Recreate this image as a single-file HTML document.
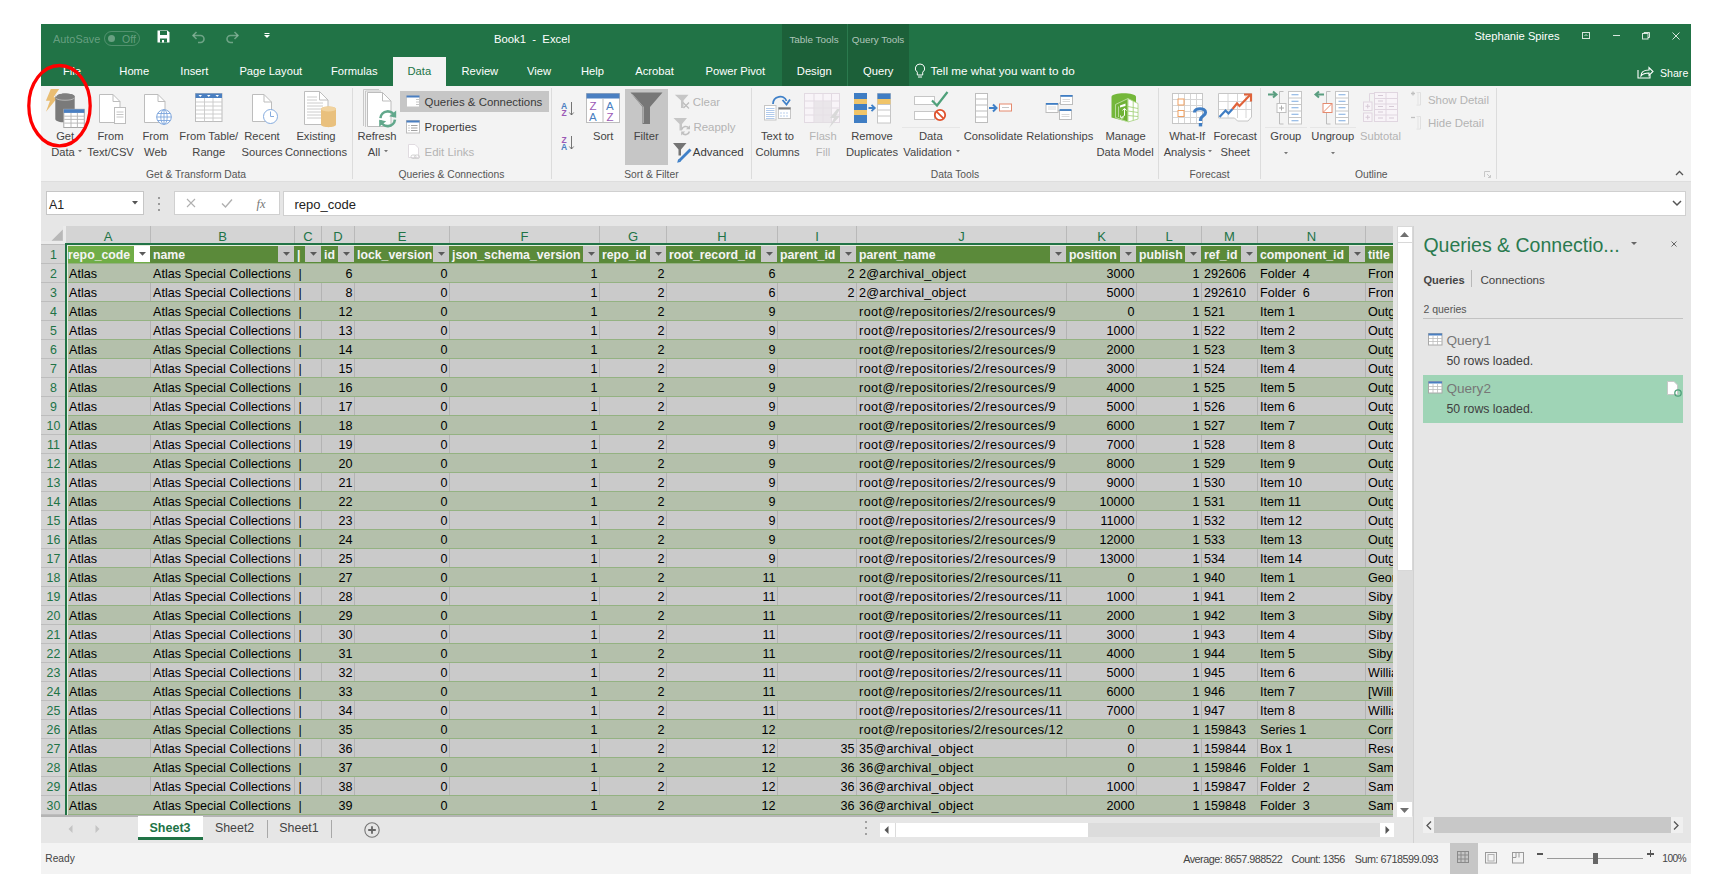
<!DOCTYPE html><html><head><meta charset="utf-8"><style>
html,body{margin:0;padding:0;background:#fff;width:1711px;height:896px;overflow:hidden;position:relative;font-family:"Liberation Sans", sans-serif;}
.a{position:absolute;}
.t{position:absolute;white-space:pre;font-family:"Liberation Sans", sans-serif;}
svg.a{overflow:visible;}
</style></head><body>
<div class="a" style="left:41px;top:24px;width:1650px;height:62px;background:#217346;"></div>
<div class="a" style="left:782px;top:24px;width:127px;height:62px;background:#1c6039;"></div>
<div class="a" style="left:847px;top:24px;width:1px;height:62px;background:#2b7a4e;"></div>
<div class="a" style="left:41px;top:86px;width:1650px;height:95px;background:#f3f3f3;"></div>
<div class="a" style="left:393px;top:57px;width:53px;height:29px;background:#f3f3f3;"></div>
<div class="a" style="left:41px;top:181px;width:1650px;height:45px;background:#e6e6e6;"></div>
<div class="a" style="left:41px;top:181px;width:1650px;height:1px;background:#dedede;"></div>
<div class="a" style="left:41px;top:816px;width:1372px;height:27px;background:#e6e6e6;"></div>
<div class="a" style="left:41px;top:843px;width:1650px;height:31px;background:#f3f3f3;"></div>
<div class="t" style="left:53px;top:33.77px;font-size:10.9px;line-height:10.9px;color:rgba(255,255,255,0.32);font-weight:400;">AutoSave</div>
<div class="a" style="left:103.5px;top:30.5px;width:36px;height:15px;border:1px solid rgba(255,255,255,0.22);border-radius:8px;box-sizing:border-box;"></div>
<div class="a" style="left:107.5px;top:35px;width:7px;height:7px;background:rgba(255,255,255,0.32);border-radius:50%;"></div>
<div class="t" style="left:122px;top:33.61px;font-size:10.5px;line-height:10.5px;color:rgba(255,255,255,0.32);font-weight:400;">Off</div>
<svg class="a" style="left:157px;top:30px;" width="13" height="13" viewBox="0 0 13 13"><path d="M0.5 0.5H10.5L12.5 2.5V12.5H0.5Z" fill="#fff"/><rect x="3" y="1" width="7" height="4" fill="#217346"/><rect x="3" y="8.5" width="7" height="4" fill="#217346"/><rect x="5" y="10" width="2" height="2.5" fill="#fff"/></svg>
<svg class="a" style="left:192px;top:30px;" width="13" height="13" viewBox="0 0 13 13"><path d="M1.5 5.5H8.5A3.5 3.5 0 0 1 8.5 12.5H6" stroke="rgba(255,255,255,0.35)" stroke-width="1.6" fill="none"/><path d="M4.5 2L1 5.5L4.5 9" stroke="rgba(255,255,255,0.35)" stroke-width="1.6" fill="none"/></svg>
<svg class="a" style="left:226px;top:30px;" width="13" height="13" viewBox="0 0 13 13"><path d="M11.5 5.5H4.5A3.5 3.5 0 0 0 4.5 12.5H7" stroke="rgba(255,255,255,0.35)" stroke-width="1.6" fill="none"/><path d="M8.5 2L12 5.5L8.5 9" stroke="rgba(255,255,255,0.35)" stroke-width="1.6" fill="none"/></svg>
<svg class="a" style="left:264px;top:33px;" width="6" height="6" viewBox="0 0 6 6"><rect x="0.5" y="0" width="5" height="1" fill="#fff"/><path d="M0 2H6L3 5Z" fill="#fff"/></svg>
<div class="t" style="left:332.00px;width:400px;text-align:center;top:33.93px;font-size:11.3px;line-height:11.3px;color:#fff;font-weight:400;">Book1  -  Excel</div>
<div class="t" style="left:1317.00px;width:400px;text-align:center;top:31.02px;font-size:11.2px;line-height:11.2px;color:#fff;font-weight:400;">Stephanie Spires</div>
<svg class="a" style="left:1582px;top:32px;" width="8" height="7" viewBox="0 0 8 7"><rect x="0.5" y="0.5" width="7" height="6" stroke="rgba(255,255,255,0.82)" fill="none" stroke-width="1"/><path d="M2.5 4L4 2.5L5.5 4" stroke="rgba(255,255,255,0.82)" fill="none" stroke-width="0.9"/></svg>
<div class="a" style="left:1612.5px;top:35px;width:7px;height:1px;background:rgba(255,255,255,0.82);"></div>
<svg class="a" style="left:1642px;top:32px;" width="8" height="8" viewBox="0 0 8 8"><rect x="0.5" y="1.5" width="5.5" height="5.5" stroke="rgba(255,255,255,0.82)" fill="none"/><path d="M2 1.5V0.5H7.5V5.5H6" stroke="rgba(255,255,255,0.82)" fill="none"/></svg>
<svg class="a" style="left:1672px;top:31.5px;" width="8" height="8" viewBox="0 0 8 8"><path d="M0.5 0.5L7.5 7.5M7.5 0.5L0.5 7.5" stroke="rgba(255,255,255,0.82)" stroke-width="1"/></svg>
<div class="t" style="left:63px;top:66.02px;font-size:11.2px;line-height:11.2px;color:#fff;font-weight:400;">File</div>
<div class="t" style="left:119.3px;top:66.02px;font-size:11.2px;line-height:11.2px;color:#fff;font-weight:400;">Home</div>
<div class="t" style="left:180.3px;top:66.02px;font-size:11.2px;line-height:11.2px;color:#fff;font-weight:400;">Insert</div>
<div class="t" style="left:239.4px;top:66.02px;font-size:11.2px;line-height:11.2px;color:#fff;font-weight:400;">Page Layout</div>
<div class="t" style="left:331px;top:66.02px;font-size:11.2px;line-height:11.2px;color:#fff;font-weight:400;">Formulas</div>
<div class="t" style="left:461.5px;top:66.02px;font-size:11.2px;line-height:11.2px;color:#fff;font-weight:400;">Review</div>
<div class="t" style="left:527px;top:66.02px;font-size:11.2px;line-height:11.2px;color:#fff;font-weight:400;">View</div>
<div class="t" style="left:581px;top:66.02px;font-size:11.2px;line-height:11.2px;color:#fff;font-weight:400;">Help</div>
<div class="t" style="left:635.3px;top:66.02px;font-size:11.2px;line-height:11.2px;color:#fff;font-weight:400;">Acrobat</div>
<div class="t" style="left:705.5px;top:66.02px;font-size:11.2px;line-height:11.2px;color:#fff;font-weight:400;">Power Pivot</div>
<div class="t" style="left:796.8px;top:66.02px;font-size:11.2px;line-height:11.2px;color:#fff;font-weight:400;">Design</div>
<div class="t" style="left:863px;top:66.02px;font-size:11.2px;line-height:11.2px;color:#fff;font-weight:400;">Query</div>
<div class="t" style="left:407.5px;top:66.02px;font-size:11.2px;line-height:11.2px;color:#217346;font-weight:400;">Data</div>
<div class="t" style="left:789.4px;top:34.92px;font-size:9.9px;line-height:9.9px;color:rgba(255,255,255,0.65);font-weight:400;">Table Tools</div>
<div class="t" style="left:851.8px;top:34.92px;font-size:9.9px;line-height:9.9px;color:rgba(255,255,255,0.65);font-weight:400;">Query Tools</div>
<svg class="a" style="left:914px;top:63px;" width="12" height="16" viewBox="0 0 12 16"><path d="M6 1A4.5 4.5 0 0 0 3.3 9.2V12H8.7V9.2A4.5 4.5 0 0 0 6 1Z" stroke="#fff" fill="none" stroke-width="1"/><path d="M4 14H8" stroke="#fff"/></svg>
<div class="t" style="left:930.5px;top:64.90px;font-size:11.7px;line-height:11.7px;color:#fff;font-weight:400;">Tell me what you want to do</div>
<svg class="a" style="left:1637px;top:65px;" width="17" height="14" viewBox="0 0 17 14"><path d="M1 5V13H13V10" stroke="#fff" fill="none" stroke-width="1.1"/><path d="M4 11C4 6 8 5 12 5V2.5L16 6.5L12 10.5V8C8.5 8 5.5 9 4 11Z" stroke="#fff" fill="none" stroke-width="1.1"/></svg>
<div class="t" style="left:1660px;top:67.53px;font-size:10.6px;line-height:10.6px;color:#fff;font-weight:400;">Share</div>
<div class="a" style="left:352px;top:88px;width:1px;height:91px;background:#dcdcdc;"></div>
<div class="a" style="left:551px;top:88px;width:1px;height:91px;background:#dcdcdc;"></div>
<div class="a" style="left:751px;top:88px;width:1px;height:91px;background:#dcdcdc;"></div>
<div class="a" style="left:1158px;top:88px;width:1px;height:91px;background:#dcdcdc;"></div>
<div class="a" style="left:1260px;top:88px;width:1px;height:91px;background:#dcdcdc;"></div>
<div class="a" style="left:1496px;top:88px;width:1px;height:91px;background:#dcdcdc;"></div>
<div class="t" style="left:-4.00px;width:400px;text-align:center;top:169.78px;font-size:10.3px;line-height:10.3px;color:#555555;font-weight:400;">Get &amp; Transform Data</div>
<div class="t" style="left:251.50px;width:400px;text-align:center;top:169.78px;font-size:10.3px;line-height:10.3px;color:#555555;font-weight:400;">Queries &amp; Connections</div>
<div class="t" style="left:451.40px;width:400px;text-align:center;top:169.78px;font-size:10.3px;line-height:10.3px;color:#555555;font-weight:400;">Sort &amp; Filter</div>
<div class="t" style="left:755.00px;width:400px;text-align:center;top:169.78px;font-size:10.3px;line-height:10.3px;color:#555555;font-weight:400;">Data Tools</div>
<div class="t" style="left:1009.60px;width:400px;text-align:center;top:169.78px;font-size:10.3px;line-height:10.3px;color:#555555;font-weight:400;">Forecast</div>
<div class="t" style="left:1171.30px;width:400px;text-align:center;top:169.78px;font-size:10.3px;line-height:10.3px;color:#555555;font-weight:400;">Outline</div>
<svg class="a" style="left:1484px;top:171px;" width="7" height="7" viewBox="0 0 7 7"><path d="M0.5 6V0.5H6" stroke="#c8c8c8" fill="none"/><path d="M3 3L6.5 6.5M6.5 4V6.5H4" stroke="#c8c8c8" fill="none"/></svg>
<svg class="a" style="left:1675px;top:170px;" width="9" height="6" viewBox="0 0 9 6"><path d="M1 5L4.5 1.5L8 5" stroke="#555" stroke-width="1.3" fill="none"/></svg>
<div class="t" style="left:-134.80px;width:400px;text-align:center;top:131.22px;font-size:11.2px;line-height:11.2px;color:#444444;font-weight:400;">Get</div>
<div class="t" style="left:-137.00px;width:400px;text-align:center;top:147.22px;font-size:11.2px;line-height:11.2px;color:#444444;font-weight:400;">Data</div>
<svg class="a" style="left:78.0px;top:150.0px;" width="4" height="2" viewBox="0 0 4 2"><path d="M0 0H4L2 2.2Z" fill="#777"/></svg>
<svg class="a" style="left:45px;top:88px;" width="42" height="42" viewBox="0 0 42 42">
<path d="M5.8 1H14.2L8.5 9.3H12.8L1 23.8L5 12.7H0.9Z" fill="#e9bd72"/>
<path d="M10.3 8.7C10.3 4.3 29.7 4.3 29.7 8.7V31C29.7 35.5 10.3 35.5 10.3 31Z" fill="#7a7a7a"/>
<ellipse cx="20" cy="8.7" rx="9.7" ry="3.3" fill="#808080"/>
<path d="M10.6 10C12.5 13 27.5 13 29.4 10" stroke="#bdbdbd" stroke-width="0.9" fill="none"/>
<path d="M10.5 8.5C12 5.5 17 5 17 5" stroke="#f3f3f3" stroke-width="1.2" fill="none"/>
<rect x="18.8" y="21.3" width="20.5" height="18.2" fill="#fff" stroke="#a8a8a8" stroke-width="1"/>
<rect x="18.8" y="21.3" width="20.5" height="3.6" fill="#4a7fc1"/>
<path d="M19.3 28.2H39M19.3 31.4H39M19.3 35.1H39M26 25V39.5M32.4 25V39.5" stroke="#b4b4b4" stroke-width="0.9"/>
</svg>
<div class="t" style="left:-89.50px;width:400px;text-align:center;top:131.22px;font-size:11.2px;line-height:11.2px;color:#444444;font-weight:400;">From</div>
<div class="t" style="left:-89.50px;width:400px;text-align:center;top:147.22px;font-size:11.2px;line-height:11.2px;color:#444444;font-weight:400;">Text/CSV</div>
<svg class="a" style="left:98px;top:93px;" width="30" height="32" viewBox="0 0 30 32">
<path d="M1.5 1.5H15L22 8.5V29.5H1.5Z" fill="#fff" stroke="#bdbdbd"/>
<path d="M15 1.5V8.5H22" fill="none" stroke="#bdbdbd"/>
<rect x="16.5" y="14.5" width="11" height="16" fill="#fff" stroke="#bdbdbd"/>
<path d="M18.5 19H25.5M18.5 21.5H25.5M18.5 24H25.5" stroke="#c6c6c6"/>
</svg>
<div class="t" style="left:-44.50px;width:400px;text-align:center;top:131.22px;font-size:11.2px;line-height:11.2px;color:#444444;font-weight:400;">From</div>
<div class="t" style="left:-44.50px;width:400px;text-align:center;top:147.22px;font-size:11.2px;line-height:11.2px;color:#444444;font-weight:400;">Web</div>
<svg class="a" style="left:143px;top:93px;" width="30" height="34" viewBox="0 0 30 34">
<path d="M1.5 1.5H15L22 8.5V29.5H1.5Z" fill="#fff" stroke="#bdbdbd"/>
<path d="M15 1.5V8.5H22" fill="none" stroke="#bdbdbd"/>
<circle cx="21" cy="24" r="7.3" fill="#fff" stroke="#7ea6dd" stroke-width="1"/>
<ellipse cx="21" cy="24" rx="3.2" ry="7.3" fill="none" stroke="#7ea6dd" stroke-width="0.9"/>
<path d="M13.7 24H28.3M14.7 20.5H27.3M14.7 27.5H27.3M21 16.7V31.3" stroke="#7ea6dd" stroke-width="0.9"/>
</svg>
<div class="t" style="left:8.80px;width:400px;text-align:center;top:131.22px;font-size:11.2px;line-height:11.2px;color:#444444;font-weight:400;">From Table/</div>
<div class="t" style="left:8.80px;width:400px;text-align:center;top:147.22px;font-size:11.2px;line-height:11.2px;color:#444444;font-weight:400;">Range</div>
<svg class="a" style="left:195px;top:93px;" width="28" height="30" viewBox="0 0 28 30">
<rect x="0.5" y="0.5" width="26.5" height="28" fill="#fff" stroke="#bdbdbd"/>
<rect x="0.5" y="0.5" width="26.5" height="4.5" fill="#4a7fc1"/>
<path d="M3.5 2H7L5.25 4Z M12 2H15.5L13.75 4Z M20.5 2H24L22.25 4Z" fill="#fff"/>
<path d="M1 9H27M1 13H27M1 17H27M1 21H27M1 25H27M9.5 5V28.5M18 5V28.5" stroke="#c8c8c8" stroke-width="0.9"/>
</svg>
<div class="t" style="left:62.00px;width:400px;text-align:center;top:131.22px;font-size:11.2px;line-height:11.2px;color:#444444;font-weight:400;">Recent</div>
<div class="t" style="left:62.00px;width:400px;text-align:center;top:147.22px;font-size:11.2px;line-height:11.2px;color:#444444;font-weight:400;">Sources</div>
<svg class="a" style="left:251px;top:93px;" width="28" height="32" viewBox="0 0 28 32">
<path d="M1.5 1.5H13L20.5 9V28.5H1.5Z" fill="#fff" stroke="#bdbdbd"/>
<path d="M13 1.5V9H20.5" fill="none" stroke="#bdbdbd"/>
<circle cx="19.5" cy="23.5" r="7" fill="#fff" stroke="#86acdf" stroke-width="1"/>
<path d="M19.5 18.5V23.5H23" stroke="#86acdf" fill="none"/>
</svg>
<div class="t" style="left:116.00px;width:400px;text-align:center;top:131.22px;font-size:11.2px;line-height:11.2px;color:#444444;font-weight:400;">Existing</div>
<div class="t" style="left:116.00px;width:400px;text-align:center;top:147.22px;font-size:11.2px;line-height:11.2px;color:#444444;font-weight:400;">Connections</div>
<svg class="a" style="left:303px;top:90px;" width="34" height="38" viewBox="0 0 34 38">
<path d="M1.5 1.5H16.5L25 10V34.5H1.5Z" fill="#fff" stroke="#bdbdbd"/>
<path d="M16.5 1.5V10H25" fill="none" stroke="#bdbdbd"/>
<path d="M4 7H14M4 10H14M4 13H20M4 16H20M4 19H20M4 22H20M4 25H20M4 28H20" stroke="#c6c6c6" stroke-width="0.9"/>
<path d="M18 19C18 15.5 33 15.5 33 19V34.5C33 38 18 38 18 34.5Z" fill="#e9c07d"/>
<ellipse cx="25.5" cy="19" rx="7.5" ry="2.5" fill="#f1d39f"/>
</svg>
<div class="t" style="left:177.00px;width:400px;text-align:center;top:131.22px;font-size:11.2px;line-height:11.2px;color:#444444;font-weight:400;">Refresh</div>
<div class="t" style="left:174.00px;width:400px;text-align:center;top:147.22px;font-size:11.2px;line-height:11.2px;color:#444444;font-weight:400;">All</div>
<svg class="a" style="left:384.0px;top:150.0px;" width="4" height="2" viewBox="0 0 4 2"><path d="M0 0H4L2 2.2Z" fill="#777"/></svg>
<svg class="a" style="left:355px;top:86px;" width="45" height="45" viewBox="0 0 45 45">
<path d="M8.5 40V3.5H24" stroke="#c8c8c8" fill="none"/>
<path d="M10.5 41V5H26" stroke="#c8c8c8" fill="none"/>
<path d="M12.5 40.5V6.5H27.5L36 15V40.5Z" fill="#fff" stroke="#bdbdbd"/>
<path d="M27.5 6.5V15H36" fill="none" stroke="#bdbdbd"/>
<path d="M25.45 32.2A7.25 7.25 0 0 1 39.7 30.8" stroke="#62a88c" stroke-width="2.6" fill="none"/>
<path d="M34.2 30.2L41.2 24.6V31.7Z" fill="#62a88c"/>
<path d="M39.95 33.7A7.25 7.25 0 0 1 25.7 34.6" stroke="#62a88c" stroke-width="2.6" fill="none"/>
<path d="M31.2 35.2L24.2 40.8V33.7Z" fill="#62a88c"/>
</svg>
<div class="a" style="left:399.5px;top:90.5px;width:149px;height:21.5px;background:#c6c6c6;"></div>
<svg class="a" style="left:406px;top:95px;" width="15" height="13" viewBox="0 0 15 13">
<rect x="0.5" y="0.5" width="13" height="11.5" fill="#fff" stroke="#c6c6c6"/>
<rect x="0.5" y="0.5" width="13" height="2" fill="#4a7fc1"/>
<path d="M10 4.5H13M10 7H13M10 9.5H13" stroke="#c6c6c6"/>
</svg>
<div class="t" style="left:424.6px;top:96.81px;font-size:11.45px;line-height:11.45px;color:#3a3a3a;font-weight:400;">Queries &amp; Connections</div>
<svg class="a" style="left:406px;top:120px;" width="15" height="14" viewBox="0 0 15 14">
<rect x="0.5" y="0.5" width="13" height="12.5" fill="#fff" stroke="#bdbdbd"/>
<rect x="0.5" y="0.5" width="13" height="2" fill="#4a7fc1"/>
<path d="M2.5 5.5H3.5M5 5.5H11.5M2.5 8H3.5M5 8H11.5M2.5 10.5H3.5M5 10.5H11.5" stroke="#8a8a8a" stroke-width="0.8"/>
</svg>
<div class="t" style="left:424.6px;top:121.61px;font-size:11.45px;line-height:11.45px;color:#3a3a3a;font-weight:400;">Properties</div>
<svg class="a" style="left:407px;top:144px;" width="15" height="16" viewBox="0 0 15 16">
<path d="M1.5 0.5H8L11.5 4V13.5H1.5Z" fill="#fff" stroke="#e0dbe0"/>
<rect x="4" y="11" width="5" height="3.5" rx="1.7" fill="none" stroke="#d0d0d0"/>
<rect x="7.5" y="11" width="5" height="3.5" rx="1.7" fill="none" stroke="#d0d0d0"/>
</svg>
<div class="t" style="left:424.6px;top:146.81px;font-size:11.45px;line-height:11.45px;color:#b4b4b4;font-weight:400;">Edit Links</div>
<svg class="a" style="left:561px;top:101px;" width="14" height="17" viewBox="0 0 14 17">
<text x="0" y="7.5" font-family="Liberation Sans" font-size="8.5" font-weight="700" fill="#4a7fc1">A</text>
<text x="0.5" y="15" font-family="Liberation Sans" font-size="8.5" font-weight="700" fill="#9b59b6">Z</text>
<path d="M10.5 1V14M8.3 11.5L10.5 14L12.7 11.5" stroke="#666" stroke-width="0.9" fill="none"/>
</svg>
<svg class="a" style="left:561px;top:135px;" width="14" height="17" viewBox="0 0 14 17">
<text x="0.5" y="7.5" font-family="Liberation Sans" font-size="8.5" font-weight="700" fill="#9b59b6">Z</text>
<text x="0" y="15" font-family="Liberation Sans" font-size="8.5" font-weight="700" fill="#4a7fc1">A</text>
<path d="M10.5 1V14M8.3 11.5L10.5 14L12.7 11.5" stroke="#666" stroke-width="0.9" fill="none"/>
</svg>
<svg class="a" style="left:586px;top:93px;" width="35" height="31" viewBox="0 0 35 31">
<rect x="0.5" y="0.5" width="33" height="29" fill="#fff" stroke="#bdbdbd"/>
<rect x="0.5" y="0.5" width="33" height="5" fill="#4a7fc1"/>
<path d="M17 5.5V29.5" stroke="#bdbdbd"/>
<text x="3.5" y="17" font-family="Liberation Sans" font-size="11.5" fill="#9b59b6">Z</text>
<text x="3" y="28" font-family="Liberation Sans" font-size="11.5" fill="#4a7fc1">A</text>
<text x="20" y="17" font-family="Liberation Sans" font-size="11.5" fill="#4a7fc1">A</text>
<text x="20.5" y="28" font-family="Liberation Sans" font-size="11.5" fill="#9b59b6">Z</text>
</svg>
<div class="t" style="left:403.20px;width:400px;text-align:center;top:131.22px;font-size:11.2px;line-height:11.2px;color:#444444;font-weight:400;">Sort</div>
<div class="a" style="left:625px;top:88.5px;width:43px;height:76px;background:#c6c6c6;"></div>
<svg class="a" style="left:629px;top:91px;" width="35" height="35" viewBox="0 0 35 35">
<path d="M1.5 1.5H33.5L21 16V33H13.5V16Z" fill="#777"/>
<path d="M3 2.8L14.5 16V32" stroke="#a8a8a8" stroke-width="1" fill="none"/>
</svg>
<div class="t" style="left:446.20px;width:400px;text-align:center;top:131.22px;font-size:11.2px;line-height:11.2px;color:#444444;font-weight:400;">Filter</div>
<svg class="a" style="left:674px;top:94px;" width="18" height="17" viewBox="0 0 18 17">
<path d="M0.8 0.8H14.5L9.5 6.5V14H7V6.5Z" fill="#c6c6c6"/>
<path d="M9 8.5L15 14.5M15 8.5L9.5 14" stroke="#bcbcbc" stroke-width="1.2"/>
</svg>
<div class="t" style="left:692.8px;top:96.81px;font-size:11.45px;line-height:11.45px;color:#b4b4b4;font-weight:400;">Clear</div>
<svg class="a" style="left:673px;top:117px;" width="20" height="20" viewBox="0 0 20 20">
<path d="M0.5 1H14L9 7V13.5H6.5V7Z" fill="#c6c6c6"/>
<path d="M8.8 12.5A4 4 0 0 1 15.8 11" stroke="#c0c0c0" stroke-width="1.6" fill="none"/>
<path d="M17 8.3V12.3H13Z" fill="#c0c0c0"/>
<path d="M16.4 14.5A4 4 0 0 1 9.3 16" stroke="#c0c0c0" stroke-width="1.6" fill="none"/>
<path d="M8.2 18.6V14.6H12.2Z" fill="#c0c0c0"/>
</svg>
<div class="t" style="left:693.5px;top:121.61px;font-size:11.45px;line-height:11.45px;color:#b4b4b4;font-weight:400;">Reapply</div>
<svg class="a" style="left:672px;top:142px;" width="22" height="22" viewBox="0 0 22 22">
<path d="M1 1H14.5L9 7.5V13.5H6.5V7.5Z" fill="#747474"/>
<path d="M18.5 7.5L7.5 18.5" stroke="#3f80c8" stroke-width="2.8"/>
<path d="M5.2 20.8L6.2 17L9 19.8Z" fill="#3f80c8"/>
</svg>
<div class="t" style="left:692.8px;top:146.81px;font-size:11.45px;line-height:11.45px;color:#3a3a3a;font-weight:400;">Advanced</div>
<div class="t" style="left:577.50px;width:400px;text-align:center;top:131.22px;font-size:11.2px;line-height:11.2px;color:#444444;font-weight:400;">Text to</div>
<div class="t" style="left:577.50px;width:400px;text-align:center;top:147.22px;font-size:11.2px;line-height:11.2px;color:#444444;font-weight:400;">Columns</div>
<svg class="a" style="left:763px;top:94px;" width="30" height="28" viewBox="0 0 30 28">
<path d="M10 10C10 2 21 0 23.5 7" stroke="#3f80c8" stroke-width="1.8" fill="none"/>
<path d="M19.5 6L23.5 10.5L27 5.5" stroke="#3f80c8" stroke-width="1.8" fill="none"/>
<rect x="1.5" y="11.5" width="11.5" height="14.5" fill="#fff" stroke="#c6c6c6"/>
<path d="M3 14.5H11.5M3 16.5H11.5M3 18.5H11.5M3 20.5H11.5M3 22.5H11.5M3 24.5H11.5" stroke="#9dbde6" stroke-width="0.8"/>
<rect x="15.5" y="13.5" width="12" height="11" fill="#fff" stroke="#c6c6c6"/>
<rect x="15.5" y="13.5" width="12" height="2" fill="#777"/>
<path d="M17 19H26M17 22H26" stroke="#a8c4e8" stroke-width="0.8" stroke-dasharray="2 1"/>
</svg>
<div class="t" style="left:623.00px;width:400px;text-align:center;top:131.22px;font-size:11.2px;line-height:11.2px;color:#b4b4b4;font-weight:400;">Flash</div>
<div class="t" style="left:623.00px;width:400px;text-align:center;top:147.22px;font-size:11.2px;line-height:11.2px;color:#b4b4b4;font-weight:400;">Fill</div>
<svg class="a" style="left:804px;top:93px;" width="38" height="36" viewBox="0 0 38 36">
<rect x="0.5" y="0.5" width="35" height="29" fill="#f8f4f8" stroke="#e2dae2"/>
<path d="M1 8H36M1 15H36M1 22H36M10 1V30M19 1V30M27.5 1V30" stroke="#e2dae2"/>
<rect x="10" y="8" width="17.5" height="21.5" fill="#e6e2e6" opacity="0.8"/>
<path d="M33 16L26 25H30L25 35L36 23H32L36 16Z" fill="#d9d9d9"/>
</svg>
<div class="t" style="left:672.00px;width:400px;text-align:center;top:131.22px;font-size:11.2px;line-height:11.2px;color:#444444;font-weight:400;">Remove</div>
<div class="t" style="left:672.00px;width:400px;text-align:center;top:147.22px;font-size:11.2px;line-height:11.2px;color:#444444;font-weight:400;">Duplicates</div>
<svg class="a" style="left:853px;top:92px;" width="39" height="32" viewBox="0 0 39 32">
<rect x="1" y="1" width="13" height="30" fill="#3f7dc3"/>
<rect x="1" y="7" width="13" height="5" fill="#f0c468"/>
<rect x="1" y="18" width="13" height="5" fill="#f0c468"/>
<rect x="24.5" y="1.5" width="13" height="29.5" fill="#fff" stroke="#c6c6c6"/>
<rect x="24.5" y="1.5" width="13" height="5.5" fill="#3f7dc3"/>
<rect x="24.5" y="7" width="13" height="5.5" fill="#f0c468"/>
<path d="M25 12.5H37.5M25 18H37.5M25 24H37.5" stroke="#c6c6c6"/>
<path d="M15.5 16H21.5M18.5 12.8L21.8 16L18.5 19.2" stroke="#3f80c8" stroke-width="1.8" fill="none"/>
</svg>
<div class="t" style="left:730.80px;width:400px;text-align:center;top:131.22px;font-size:11.2px;line-height:11.2px;color:#444444;font-weight:400;">Data</div>
<div class="t" style="left:727.50px;width:400px;text-align:center;top:147.22px;font-size:11.2px;line-height:11.2px;color:#444444;font-weight:400;">Validation</div>
<svg class="a" style="left:956.0px;top:150.0px;" width="4" height="2" viewBox="0 0 4 2"><path d="M0 0H4L2 2.2Z" fill="#777"/></svg>
<svg class="a" style="left:913px;top:90px;" width="37" height="32" viewBox="0 0 37 32">
<rect x="1.5" y="6.5" width="20" height="8" fill="#fff" stroke="#c6c6c6"/>
<rect x="1.5" y="21.5" width="20" height="8" fill="#fff" stroke="#c6c6c6"/>
<path d="M19 10.5L24 15.5L34.5 2" stroke="#4fa07a" stroke-width="2.2" fill="none"/>
<circle cx="27" cy="25" r="5.2" fill="#fff" stroke="#e0522d" stroke-width="1.8"/>
<path d="M23.6 21.6L30.4 28.4" stroke="#e0522d" stroke-width="1.8"/>
</svg>
<div class="a" style="left:902px;top:127px;width:58px;height:1px;background:#e6e6e6;"></div>
<div class="t" style="left:793.30px;width:400px;text-align:center;top:131.22px;font-size:11.2px;line-height:11.2px;color:#444444;font-weight:400;">Consolidate</div>
<svg class="a" style="left:974px;top:92px;" width="40" height="32" viewBox="0 0 40 32">
<rect x="1.5" y="1.5" width="12" height="29" fill="#fff" stroke="#bdbdbd"/>
<path d="M2 7H13M2 13H13M2 19H13M2 25H13" stroke="#bdbdbd"/>
<path d="M15 16H22M19 12.5L22.5 16L19 19.5" stroke="#3f80c8" stroke-width="2" fill="none"/>
<rect x="25.5" y="12" width="12" height="7" fill="#fff" stroke="#e58a6e"/>
<path d="M28 15.5H35" stroke="#c6c6c6"/>
</svg>
<div class="t" style="left:859.80px;width:400px;text-align:center;top:131.22px;font-size:11.2px;line-height:11.2px;color:#444444;font-weight:400;">Relationships</div>
<svg class="a" style="left:1045px;top:94px;" width="30" height="28" viewBox="0 0 30 28">
<rect x="15.5" y="1.5" width="12" height="9" fill="#fff" stroke="#bdbdbd"/>
<rect x="15.5" y="1" width="12" height="1.8" fill="#3f7dc3"/>
<rect x="1" y="9.5" width="12" height="9" fill="#fff" stroke="#bdbdbd"/>
<rect x="1" y="9" width="12" height="1.8" fill="#3f7dc3"/>
<rect x="14.5" y="16.5" width="12" height="9" fill="#fff" stroke="#bdbdbd"/>
<path d="M14.5 16H26.5" stroke="#3f7dc3" stroke-width="1.8"/>
<path d="M17.5 5.5H25M17.5 7.5H25M3 13H11M3 15H11M16.5 20.5H24.5M16.5 22.5H24.5" stroke="#d0d0d0" stroke-width="0.8"/>
<path d="M13 11L15.5 8M13 16L14.5 18" stroke="#bdbdbd"/>
</svg>
<div class="t" style="left:925.60px;width:400px;text-align:center;top:131.22px;font-size:11.2px;line-height:11.2px;color:#444444;font-weight:400;">Manage</div>
<div class="t" style="left:925.10px;width:400px;text-align:center;top:147.22px;font-size:11.2px;line-height:11.2px;color:#444444;font-weight:400;">Data Model</div>
<svg class="a" style="left:1105px;top:88px;" width="40" height="40" viewBox="0 0 40 40">
<path d="M6.5 9C6.5 4 31 4 31 9V15L23 34L6.5 29.5Z" fill="#74b73a"/>
<path d="M10.5 16.5L23 10.5V34L10.5 29.5Z" fill="#6fb236" stroke="#d8ecc8" stroke-width="0.7"/>
<path d="M23 10.5L33 15.5V31L23 34Z" fill="#fff" stroke="#a6d27e" stroke-width="0.8"/>
<path d="M28.2 13V32.5M23 18.5L33 20.5M23 23L33 24.5M23 27.5L33 28.5" stroke="#a6d27e" stroke-width="0.9"/>
<path d="M15 17.5L20.5 15.5V18L15 19.5Z" fill="#fff"/>
<path d="M13.5 18.5V29" stroke="#e6f2dc" stroke-width="0.6"/>
<path d="M19.5 21V27.5L16.5 29.5" stroke="#fff" stroke-width="1" fill="none"/>
<path d="M17.5 22.5L19.5 20.3L21.5 22.5" stroke="#fff" stroke-width="1" fill="none"/>
<path d="M15.5 27.5L16 30L18.5 29.8" stroke="#fff" stroke-width="1" fill="none"/>
</svg>
<div class="t" style="left:987.20px;width:400px;text-align:center;top:131.22px;font-size:11.2px;line-height:11.2px;color:#444444;font-weight:400;">What-If</div>
<div class="t" style="left:984.50px;width:400px;text-align:center;top:147.22px;font-size:11.2px;line-height:11.2px;color:#444444;font-weight:400;">Analysis</div>
<svg class="a" style="left:1207.5px;top:150.0px;" width="4" height="2" viewBox="0 0 4 2"><path d="M0 0H4L2 2.2Z" fill="#777"/></svg>
<svg class="a" style="left:1171px;top:92px;" width="38" height="36" viewBox="0 0 38 36">
<rect x="1.5" y="1.5" width="30" height="30" fill="#fff" stroke="#c6c6c6"/>
<path d="M2 7.5H31M2 13.5H31M2 19.5H31M2 25.5H31M7.5 2V31M13.5 2V31M19.5 2V31M25.5 2V31" stroke="#d6d6d6"/>
<rect x="7" y="7" width="6" height="6" fill="#fff" stroke="#f0a060"/>
<rect x="7" y="18.5" width="6" height="6" fill="#fff" stroke="#f0a060"/>
<path d="M23.5 20.5C23.5 15.5 34.5 15.5 34.5 20.5C34.5 24 29.5 24 29.5 27.5V29" stroke="#3f7dc3" stroke-width="3.2" fill="none"/>
<rect x="27.8" y="31" width="3.4" height="3.4" fill="#3f7dc3"/>
</svg>
<div class="t" style="left:1035.20px;width:400px;text-align:center;top:131.22px;font-size:11.2px;line-height:11.2px;color:#444444;font-weight:400;">Forecast</div>
<div class="t" style="left:1035.20px;width:400px;text-align:center;top:147.22px;font-size:11.2px;line-height:11.2px;color:#444444;font-weight:400;">Sheet</div>
<svg class="a" style="left:1217px;top:92px;" width="37" height="33" viewBox="0 0 37 33">
<path d="M1.5 1.5H34.5V25L31 29H20.5L17.5 26H1.5Z" fill="#fff" stroke="#c6c6c6"/>
<path d="M2 9.5H34M2 17.5H34M11 2V26M20.5 2V26M29 2V26" stroke="#d6d6d6"/>
<path d="M2.5 25L8.5 18.5L11.5 21.5L15.5 17" stroke="#3f7dc3" stroke-width="2.2" fill="none"/>
<path d="M15.5 17L20 11.5L22.5 14L33 3" stroke="#e0633a" stroke-width="2.2" fill="none"/>
<path d="M27 2.5H34V9.5" stroke="#e0633a" stroke-width="2.2" fill="none"/>
</svg>
<div class="t" style="left:1085.80px;width:400px;text-align:center;top:131.22px;font-size:11.2px;line-height:11.2px;color:#444444;font-weight:400;">Group</div>
<svg class="a" style="left:1284.0px;top:151.5px;" width="4" height="2" viewBox="0 0 4 2"><path d="M0 0H4L2 2.2Z" fill="#777"/></svg>
<svg class="a" style="left:1266px;top:90px;" width="38" height="37" viewBox="0 0 38 37">
<path d="M2 4.5H10M7 1.5L10.5 4.5L7 7.5" stroke="#5a9e80" stroke-width="2" fill="none"/>
<path d="M17.5 1.5H13.5V34H17.5" stroke="#bdbdbd" fill="none"/>
<rect x="11" y="13.5" width="9" height="9" fill="#fff" stroke="#c0c0c0"/>
<path d="M15.5 15.5V20.5M13 18H18" stroke="#aaa"/>
<rect x="22.5" y="1.5" width="13" height="32.5" fill="#fff" stroke="#c6c6c6"/>
<path d="M23 8H35.5M23 14.5H35.5M23 21H35.5M23 27.5H35.5" stroke="#c6c6c6"/>
<path d="M25.5 4.8H32.5M25.5 11.3H32.5M25.5 17.8H32.5M25.5 24.3H32.5M25.5 30.8H32.5" stroke="#7eaadf" stroke-width="1.1"/>
</svg>
<div class="a" style="left:1265px;top:127px;width:42px;height:1px;background:#e6e6e6;"></div>
<div class="t" style="left:1132.80px;width:400px;text-align:center;top:131.22px;font-size:11.2px;line-height:11.2px;color:#444444;font-weight:400;">Ungroup</div>
<svg class="a" style="left:1331.0px;top:151.5px;" width="4" height="2" viewBox="0 0 4 2"><path d="M0 0H4L2 2.2Z" fill="#777"/></svg>
<svg class="a" style="left:1313px;top:90px;" width="38" height="37" viewBox="0 0 38 37">
<path d="M11 4.5H3M6 1.5L2.5 4.5L6 7.5" stroke="#5a9e80" stroke-width="2" fill="none"/>
<path d="M17.5 1.5H13.5V34H17.5" stroke="#bdbdbd" fill="none"/>
<rect x="10" y="13.5" width="9" height="9" fill="#fff" stroke="#e58a6e"/>
<path d="M10.5 22L18.5 14" stroke="#e58a6e"/>
<rect x="22.5" y="1.5" width="13" height="32.5" fill="#fff" stroke="#c6c6c6"/>
<path d="M23 8H35.5M23 14.5H35.5M23 21H35.5M23 27.5H35.5" stroke="#c6c6c6"/>
<path d="M25.5 4.8H32.5M25.5 11.3H32.5M25.5 17.8H32.5M25.5 24.3H32.5M25.5 30.8H32.5" stroke="#7eaadf" stroke-width="1.1"/>
</svg>
<div class="a" style="left:1310px;top:127px;width:46px;height:1px;background:#e6e6e6;"></div>
<div class="t" style="left:1180.50px;width:400px;text-align:center;top:131.22px;font-size:11.2px;line-height:11.2px;color:#b4b4b4;font-weight:400;">Subtotal</div>
<svg class="a" style="left:1362px;top:92px;" width="37" height="32" viewBox="0 0 37 32">
<path d="M7.5 9.5V1.5H13" stroke="#e0d6e0" fill="none"/>
<rect x="12.5" y="0.5" width="23" height="29" fill="#f8f4f8" stroke="#e0d6e0"/>
<path d="M13 6.5H35M13 12H35M13 17.5H35M13 23H35M24 1V29.5" stroke="#e0d6e0"/>
<path d="M16 3.5H21M16 9H21M16 14.5H21M27 14.5H32M16 20H21M16 26H21M27 26H32" stroke="#d6cad6"/>
<rect x="1.5" y="10" width="8.5" height="8.5" fill="#f8f4f8" stroke="#e0d6e0"/>
<rect x="1.5" y="21" width="8.5" height="8.5" fill="#f8f4f8" stroke="#e0d6e0"/>
<path d="M5.75 12V16.5M3.5 14.25H8M5.75 23V27.5M3.5 25.25H8" stroke="#d6cad6"/>
</svg>
<svg class="a" style="left:1410px;top:91px;" width="16" height="16" viewBox="0 0 16 16">
<path d="M1 2.5H5M3 0.5V4.5" stroke="#c0c0c0" stroke-width="1.3"/>
<path d="M6.5 1.5H10.5V14H6.5" stroke="#e0e0e0" fill="none"/>
<path d="M8 1.5V14" stroke="#e8e8e8" stroke-width="1.5"/>
</svg>
<div class="t" style="left:1427.9px;top:94.81px;font-size:11.45px;line-height:11.45px;color:#b4b4b4;font-weight:400;">Show Detail</div>
<svg class="a" style="left:1410px;top:115px;" width="16" height="16" viewBox="0 0 16 16">
<path d="M1 2.5H5" stroke="#c0c0c0" stroke-width="1.3"/>
<path d="M6.5 1.5H10.5V14H6.5" stroke="#e0e0e0" fill="none"/>
<path d="M8 1.5V14" stroke="#e8e8e8" stroke-width="1.5"/>
</svg>
<div class="t" style="left:1428px;top:118.11px;font-size:11.45px;line-height:11.45px;color:#b4b4b4;font-weight:400;">Hide Detail</div>
<div class="a" style="left:46px;top:191px;width:98px;height:24px;background:#fff;border:1px solid #c6c6c6;box-sizing:border-box;"></div>
<div class="t" style="left:49px;top:199.00px;font-size:12.4px;line-height:12.4px;color:#222;font-weight:400;">A1</div>
<svg class="a" style="left:132px;top:201px;" width="6" height="4" viewBox="0 0 6 4"><path d="M0 0H6L3 3.5Z" fill="#555"/></svg>
<div class="a" style="left:158px;top:197px;width:1.5px;height:1.5px;background:#9a9a9a;"></div>
<div class="a" style="left:158px;top:203px;width:1.5px;height:1.5px;background:#9a9a9a;"></div>
<div class="a" style="left:158px;top:209px;width:1.5px;height:1.5px;background:#9a9a9a;"></div>
<div class="a" style="left:173.5px;top:191px;width:106px;height:24px;background:#fff;border:1px solid #d0d0d0;box-sizing:border-box;"></div>
<svg class="a" style="left:186px;top:198px;" width="10" height="10" viewBox="0 0 10 10"><path d="M1 1L9 9M9 1L1 9" stroke="#b0b0b0" stroke-width="1.1"/></svg>
<svg class="a" style="left:221px;top:198px;" width="12" height="10" viewBox="0 0 12 10"><path d="M1 5.5L4.5 9L11 1.5" stroke="#b0b0b0" stroke-width="1.4" fill="none"/></svg>
<div class="t" style="left:256.5px;top:197.92px;font-size:12.5px;line-height:12.5px;color:#777;font-weight:400;font-family:'Liberation Serif',serif;font-style:italic;">fx</div>
<div class="a" style="left:283px;top:191px;width:1403px;height:25px;background:#fff;border:1px solid #d0d0d0;box-sizing:border-box;"></div>
<div class="t" style="left:294.5px;top:198.30px;font-size:13px;line-height:13px;color:#222;font-weight:400;">repo_code</div>
<svg class="a" style="left:1672px;top:200px;" width="10" height="6" viewBox="0 0 10 6"><path d="M1 1L5 5L9 1" stroke="#555" stroke-width="1.5" fill="none"/></svg>
<div class="a" style="left:66px;top:226px;width:1327px;height:18px;background:#d4d4d4;"></div>
<div class="a" style="left:41px;top:226px;width:25px;height:18px;background:#e6e6e6;"></div>
<svg class="a" style="left:50px;top:228px;" width="14" height="14" viewBox="0 0 14 14"><path d="M12.8 1.5V12.8H1.5Z" fill="#b8b8b8"/></svg>
<div class="a" style="left:63px;top:226px;width:3px;height:17px;background:#ebebeb;"></div>
<div class="a" style="left:41px;top:240.5px;width:25px;height:3px;background:#ebebeb;"></div>
<div class="t" style="left:-92.00px;width:400px;text-align:center;top:229.50px;font-size:13px;line-height:13px;color:#217346;font-weight:400;">A</div>
<div class="a" style="left:150px;top:226px;width:1px;height:18px;background:#b9b9b9;"></div>
<div class="t" style="left:22.50px;width:400px;text-align:center;top:229.50px;font-size:13px;line-height:13px;color:#217346;font-weight:400;">B</div>
<div class="a" style="left:294px;top:226px;width:1px;height:18px;background:#b9b9b9;"></div>
<div class="t" style="left:108.00px;width:400px;text-align:center;top:229.50px;font-size:13px;line-height:13px;color:#217346;font-weight:400;">C</div>
<div class="a" style="left:321px;top:226px;width:1px;height:18px;background:#b9b9b9;"></div>
<div class="t" style="left:138.00px;width:400px;text-align:center;top:229.50px;font-size:13px;line-height:13px;color:#217346;font-weight:400;">D</div>
<div class="a" style="left:354px;top:226px;width:1px;height:18px;background:#b9b9b9;"></div>
<div class="t" style="left:202.00px;width:400px;text-align:center;top:229.50px;font-size:13px;line-height:13px;color:#217346;font-weight:400;">E</div>
<div class="a" style="left:449px;top:226px;width:1px;height:18px;background:#b9b9b9;"></div>
<div class="t" style="left:324.50px;width:400px;text-align:center;top:229.50px;font-size:13px;line-height:13px;color:#217346;font-weight:400;">F</div>
<div class="a" style="left:599px;top:226px;width:1px;height:18px;background:#b9b9b9;"></div>
<div class="t" style="left:433.00px;width:400px;text-align:center;top:229.50px;font-size:13px;line-height:13px;color:#217346;font-weight:400;">G</div>
<div class="a" style="left:666px;top:226px;width:1px;height:18px;background:#b9b9b9;"></div>
<div class="t" style="left:522.00px;width:400px;text-align:center;top:229.50px;font-size:13px;line-height:13px;color:#217346;font-weight:400;">H</div>
<div class="a" style="left:777px;top:226px;width:1px;height:18px;background:#b9b9b9;"></div>
<div class="t" style="left:617.00px;width:400px;text-align:center;top:229.50px;font-size:13px;line-height:13px;color:#217346;font-weight:400;">I</div>
<div class="a" style="left:856px;top:226px;width:1px;height:18px;background:#b9b9b9;"></div>
<div class="t" style="left:761.50px;width:400px;text-align:center;top:229.50px;font-size:13px;line-height:13px;color:#217346;font-weight:400;">J</div>
<div class="a" style="left:1066px;top:226px;width:1px;height:18px;background:#b9b9b9;"></div>
<div class="t" style="left:901.50px;width:400px;text-align:center;top:229.50px;font-size:13px;line-height:13px;color:#217346;font-weight:400;">K</div>
<div class="a" style="left:1136px;top:226px;width:1px;height:18px;background:#b9b9b9;"></div>
<div class="t" style="left:969.00px;width:400px;text-align:center;top:229.50px;font-size:13px;line-height:13px;color:#217346;font-weight:400;">L</div>
<div class="a" style="left:1201px;top:226px;width:1px;height:18px;background:#b9b9b9;"></div>
<div class="t" style="left:1029.50px;width:400px;text-align:center;top:229.50px;font-size:13px;line-height:13px;color:#217346;font-weight:400;">M</div>
<div class="a" style="left:1257px;top:226px;width:1px;height:18px;background:#b9b9b9;"></div>
<div class="t" style="left:1111.50px;width:400px;text-align:center;top:229.50px;font-size:13px;line-height:13px;color:#217346;font-weight:400;">N</div>
<div class="a" style="left:1365px;top:226px;width:1px;height:18px;background:#b9b9b9;"></div>
<div class="a" style="left:41px;top:244px;width:24px;height:571px;background:#d4d4d4;"></div>
<div class="a" style="left:41px;top:244px;width:24px;height:1px;background:#bdbdbd;"></div>
<div class="a" style="left:41px;top:263px;width:24px;height:1px;background:#bdbdbd;"></div>
<div class="a" style="left:41px;top:282px;width:24px;height:1px;background:#bdbdbd;"></div>
<div class="a" style="left:41px;top:301px;width:24px;height:1px;background:#bdbdbd;"></div>
<div class="a" style="left:41px;top:320px;width:24px;height:1px;background:#bdbdbd;"></div>
<div class="a" style="left:41px;top:339px;width:24px;height:1px;background:#bdbdbd;"></div>
<div class="a" style="left:41px;top:358px;width:24px;height:1px;background:#bdbdbd;"></div>
<div class="a" style="left:41px;top:377px;width:24px;height:1px;background:#bdbdbd;"></div>
<div class="a" style="left:41px;top:396px;width:24px;height:1px;background:#bdbdbd;"></div>
<div class="a" style="left:41px;top:415px;width:24px;height:1px;background:#bdbdbd;"></div>
<div class="a" style="left:41px;top:434px;width:24px;height:1px;background:#bdbdbd;"></div>
<div class="a" style="left:41px;top:453px;width:24px;height:1px;background:#bdbdbd;"></div>
<div class="a" style="left:41px;top:472px;width:24px;height:1px;background:#bdbdbd;"></div>
<div class="a" style="left:41px;top:491px;width:24px;height:1px;background:#bdbdbd;"></div>
<div class="a" style="left:41px;top:510px;width:24px;height:1px;background:#bdbdbd;"></div>
<div class="a" style="left:41px;top:529px;width:24px;height:1px;background:#bdbdbd;"></div>
<div class="a" style="left:41px;top:548px;width:24px;height:1px;background:#bdbdbd;"></div>
<div class="a" style="left:41px;top:567px;width:24px;height:1px;background:#bdbdbd;"></div>
<div class="a" style="left:41px;top:586px;width:24px;height:1px;background:#bdbdbd;"></div>
<div class="a" style="left:41px;top:605px;width:24px;height:1px;background:#bdbdbd;"></div>
<div class="a" style="left:41px;top:624px;width:24px;height:1px;background:#bdbdbd;"></div>
<div class="a" style="left:41px;top:643px;width:24px;height:1px;background:#bdbdbd;"></div>
<div class="a" style="left:41px;top:662px;width:24px;height:1px;background:#bdbdbd;"></div>
<div class="a" style="left:41px;top:681px;width:24px;height:1px;background:#bdbdbd;"></div>
<div class="a" style="left:41px;top:700px;width:24px;height:1px;background:#bdbdbd;"></div>
<div class="a" style="left:41px;top:719px;width:24px;height:1px;background:#bdbdbd;"></div>
<div class="a" style="left:41px;top:738px;width:24px;height:1px;background:#bdbdbd;"></div>
<div class="a" style="left:41px;top:757px;width:24px;height:1px;background:#bdbdbd;"></div>
<div class="a" style="left:41px;top:776px;width:24px;height:1px;background:#bdbdbd;"></div>
<div class="a" style="left:41px;top:795px;width:24px;height:1px;background:#bdbdbd;"></div>
<div class="a" style="left:41px;top:814px;width:24px;height:1px;background:#bdbdbd;"></div>
<div class="t" style="left:-146.50px;width:400px;text-align:center;top:249.00px;font-size:12.4px;line-height:12.4px;color:#217346;font-weight:400;">1</div>
<div class="t" style="left:-146.50px;width:400px;text-align:center;top:268.00px;font-size:12.4px;line-height:12.4px;color:#217346;font-weight:400;">2</div>
<div class="t" style="left:-146.50px;width:400px;text-align:center;top:287.00px;font-size:12.4px;line-height:12.4px;color:#217346;font-weight:400;">3</div>
<div class="t" style="left:-146.50px;width:400px;text-align:center;top:306.00px;font-size:12.4px;line-height:12.4px;color:#217346;font-weight:400;">4</div>
<div class="t" style="left:-146.50px;width:400px;text-align:center;top:325.00px;font-size:12.4px;line-height:12.4px;color:#217346;font-weight:400;">5</div>
<div class="t" style="left:-146.50px;width:400px;text-align:center;top:344.00px;font-size:12.4px;line-height:12.4px;color:#217346;font-weight:400;">6</div>
<div class="t" style="left:-146.50px;width:400px;text-align:center;top:363.00px;font-size:12.4px;line-height:12.4px;color:#217346;font-weight:400;">7</div>
<div class="t" style="left:-146.50px;width:400px;text-align:center;top:382.00px;font-size:12.4px;line-height:12.4px;color:#217346;font-weight:400;">8</div>
<div class="t" style="left:-146.50px;width:400px;text-align:center;top:401.00px;font-size:12.4px;line-height:12.4px;color:#217346;font-weight:400;">9</div>
<div class="t" style="left:-146.50px;width:400px;text-align:center;top:420.00px;font-size:12.4px;line-height:12.4px;color:#217346;font-weight:400;">10</div>
<div class="t" style="left:-146.50px;width:400px;text-align:center;top:439.00px;font-size:12.4px;line-height:12.4px;color:#217346;font-weight:400;">11</div>
<div class="t" style="left:-146.50px;width:400px;text-align:center;top:458.00px;font-size:12.4px;line-height:12.4px;color:#217346;font-weight:400;">12</div>
<div class="t" style="left:-146.50px;width:400px;text-align:center;top:477.00px;font-size:12.4px;line-height:12.4px;color:#217346;font-weight:400;">13</div>
<div class="t" style="left:-146.50px;width:400px;text-align:center;top:496.00px;font-size:12.4px;line-height:12.4px;color:#217346;font-weight:400;">14</div>
<div class="t" style="left:-146.50px;width:400px;text-align:center;top:515.00px;font-size:12.4px;line-height:12.4px;color:#217346;font-weight:400;">15</div>
<div class="t" style="left:-146.50px;width:400px;text-align:center;top:534.00px;font-size:12.4px;line-height:12.4px;color:#217346;font-weight:400;">16</div>
<div class="t" style="left:-146.50px;width:400px;text-align:center;top:553.00px;font-size:12.4px;line-height:12.4px;color:#217346;font-weight:400;">17</div>
<div class="t" style="left:-146.50px;width:400px;text-align:center;top:572.00px;font-size:12.4px;line-height:12.4px;color:#217346;font-weight:400;">18</div>
<div class="t" style="left:-146.50px;width:400px;text-align:center;top:591.00px;font-size:12.4px;line-height:12.4px;color:#217346;font-weight:400;">19</div>
<div class="t" style="left:-146.50px;width:400px;text-align:center;top:610.00px;font-size:12.4px;line-height:12.4px;color:#217346;font-weight:400;">20</div>
<div class="t" style="left:-146.50px;width:400px;text-align:center;top:629.00px;font-size:12.4px;line-height:12.4px;color:#217346;font-weight:400;">21</div>
<div class="t" style="left:-146.50px;width:400px;text-align:center;top:648.00px;font-size:12.4px;line-height:12.4px;color:#217346;font-weight:400;">22</div>
<div class="t" style="left:-146.50px;width:400px;text-align:center;top:667.00px;font-size:12.4px;line-height:12.4px;color:#217346;font-weight:400;">23</div>
<div class="t" style="left:-146.50px;width:400px;text-align:center;top:686.00px;font-size:12.4px;line-height:12.4px;color:#217346;font-weight:400;">24</div>
<div class="t" style="left:-146.50px;width:400px;text-align:center;top:705.00px;font-size:12.4px;line-height:12.4px;color:#217346;font-weight:400;">25</div>
<div class="t" style="left:-146.50px;width:400px;text-align:center;top:724.00px;font-size:12.4px;line-height:12.4px;color:#217346;font-weight:400;">26</div>
<div class="t" style="left:-146.50px;width:400px;text-align:center;top:743.00px;font-size:12.4px;line-height:12.4px;color:#217346;font-weight:400;">27</div>
<div class="t" style="left:-146.50px;width:400px;text-align:center;top:762.00px;font-size:12.4px;line-height:12.4px;color:#217346;font-weight:400;">28</div>
<div class="t" style="left:-146.50px;width:400px;text-align:center;top:781.00px;font-size:12.4px;line-height:12.4px;color:#217346;font-weight:400;">29</div>
<div class="t" style="left:-146.50px;width:400px;text-align:center;top:800.00px;font-size:12.4px;line-height:12.4px;color:#217346;font-weight:400;">30</div>
<div class="a" style="left:66px;top:244px;width:1327px;height:571px;overflow:hidden;">
<div class="a" style="left:0px;top:0px;width:1527px;height:19px;background:#5b8a3a;"></div>
<div class="a" style="left:0px;top:0px;width:84px;height:19px;background:#70ad47;"></div>
<div class="a" style="left:0px;top:0px;width:67px;height:19px;overflow:hidden;">
<div class="t" style="left:2px;top:5.19px;font-size:12.3px;line-height:12.3px;color:#f4f4f4;font-weight:700;">repo_code</div></div>
<div class="a" style="left:68px;top:1px;width:16px;height:17px;background:#fff;"></div>
<svg class="a" style="left:72.5px;top:8px" width="7" height="4" viewBox="0 0 7 4"><path d="M0 0H7L3.5 3.8Z" fill="#5a5a5a"/></svg>
<div class="a" style="left:85px;top:0px;width:126px;height:19px;overflow:hidden;">
<div class="t" style="left:2px;top:5.19px;font-size:12.3px;line-height:12.3px;color:#f4f4f4;font-weight:700;">name</div></div>
<div class="a" style="left:212px;top:1px;width:16px;height:17px;background:#c8c8c8;"></div>
<svg class="a" style="left:216.5px;top:8px" width="7" height="4" viewBox="0 0 7 4"><path d="M0 0H7L3.5 3.8Z" fill="#5a5a5a"/></svg>
<div class="a" style="left:229px;top:0px;width:9px;height:19px;overflow:hidden;">
<div class="t" style="left:2px;top:5.19px;font-size:12.3px;line-height:12.3px;color:#f4f4f4;font-weight:700;">|</div></div>
<div class="a" style="left:239px;top:1px;width:16px;height:17px;background:#c8c8c8;"></div>
<svg class="a" style="left:243.5px;top:8px" width="7" height="4" viewBox="0 0 7 4"><path d="M0 0H7L3.5 3.8Z" fill="#5a5a5a"/></svg>
<div class="a" style="left:256px;top:0px;width:15px;height:19px;overflow:hidden;">
<div class="t" style="left:2px;top:5.19px;font-size:12.3px;line-height:12.3px;color:#f4f4f4;font-weight:700;">id</div></div>
<div class="a" style="left:272px;top:1px;width:16px;height:17px;background:#c8c8c8;"></div>
<svg class="a" style="left:276.5px;top:8px" width="7" height="4" viewBox="0 0 7 4"><path d="M0 0H7L3.5 3.8Z" fill="#5a5a5a"/></svg>
<div class="a" style="left:289px;top:0px;width:77px;height:19px;overflow:hidden;">
<div class="t" style="left:2px;top:5.19px;font-size:12.3px;line-height:12.3px;color:#f4f4f4;font-weight:700;">lock_version</div></div>
<div class="a" style="left:367px;top:1px;width:16px;height:17px;background:#c8c8c8;"></div>
<svg class="a" style="left:371.5px;top:8px" width="7" height="4" viewBox="0 0 7 4"><path d="M0 0H7L3.5 3.8Z" fill="#5a5a5a"/></svg>
<div class="a" style="left:384px;top:0px;width:132px;height:19px;overflow:hidden;">
<div class="t" style="left:2px;top:5.19px;font-size:12.3px;line-height:12.3px;color:#f4f4f4;font-weight:700;">json_schema_version</div></div>
<div class="a" style="left:517px;top:1px;width:16px;height:17px;background:#c8c8c8;"></div>
<svg class="a" style="left:521.5px;top:8px" width="7" height="4" viewBox="0 0 7 4"><path d="M0 0H7L3.5 3.8Z" fill="#5a5a5a"/></svg>
<div class="a" style="left:534px;top:0px;width:49px;height:19px;overflow:hidden;">
<div class="t" style="left:2px;top:5.19px;font-size:12.3px;line-height:12.3px;color:#f4f4f4;font-weight:700;">repo_id</div></div>
<div class="a" style="left:584px;top:1px;width:16px;height:17px;background:#c8c8c8;"></div>
<svg class="a" style="left:588.5px;top:8px" width="7" height="4" viewBox="0 0 7 4"><path d="M0 0H7L3.5 3.8Z" fill="#5a5a5a"/></svg>
<div class="a" style="left:601px;top:0px;width:93px;height:19px;overflow:hidden;">
<div class="t" style="left:2px;top:5.19px;font-size:12.3px;line-height:12.3px;color:#f4f4f4;font-weight:700;">root_record_id</div></div>
<div class="a" style="left:695px;top:1px;width:16px;height:17px;background:#c8c8c8;"></div>
<svg class="a" style="left:699.5px;top:8px" width="7" height="4" viewBox="0 0 7 4"><path d="M0 0H7L3.5 3.8Z" fill="#5a5a5a"/></svg>
<div class="a" style="left:712px;top:0px;width:61px;height:19px;overflow:hidden;">
<div class="t" style="left:2px;top:5.19px;font-size:12.3px;line-height:12.3px;color:#f4f4f4;font-weight:700;">parent_id</div></div>
<div class="a" style="left:774px;top:1px;width:16px;height:17px;background:#c8c8c8;"></div>
<svg class="a" style="left:778.5px;top:8px" width="7" height="4" viewBox="0 0 7 4"><path d="M0 0H7L3.5 3.8Z" fill="#5a5a5a"/></svg>
<div class="a" style="left:791px;top:0px;width:192px;height:19px;overflow:hidden;">
<div class="t" style="left:2px;top:5.19px;font-size:12.3px;line-height:12.3px;color:#f4f4f4;font-weight:700;">parent_name</div></div>
<div class="a" style="left:984px;top:1px;width:16px;height:17px;background:#c8c8c8;"></div>
<svg class="a" style="left:988.5px;top:8px" width="7" height="4" viewBox="0 0 7 4"><path d="M0 0H7L3.5 3.8Z" fill="#5a5a5a"/></svg>
<div class="a" style="left:1001px;top:0px;width:52px;height:19px;overflow:hidden;">
<div class="t" style="left:2px;top:5.19px;font-size:12.3px;line-height:12.3px;color:#f4f4f4;font-weight:700;">position</div></div>
<div class="a" style="left:1054px;top:1px;width:16px;height:17px;background:#c8c8c8;"></div>
<svg class="a" style="left:1058.5px;top:8px" width="7" height="4" viewBox="0 0 7 4"><path d="M0 0H7L3.5 3.8Z" fill="#5a5a5a"/></svg>
<div class="a" style="left:1071px;top:0px;width:47px;height:19px;overflow:hidden;">
<div class="t" style="left:2px;top:5.19px;font-size:12.3px;line-height:12.3px;color:#f4f4f4;font-weight:700;">publish</div></div>
<div class="a" style="left:1119px;top:1px;width:16px;height:17px;background:#c8c8c8;"></div>
<svg class="a" style="left:1123.5px;top:8px" width="7" height="4" viewBox="0 0 7 4"><path d="M0 0H7L3.5 3.8Z" fill="#5a5a5a"/></svg>
<div class="a" style="left:1136px;top:0px;width:38px;height:19px;overflow:hidden;">
<div class="t" style="left:2px;top:5.19px;font-size:12.3px;line-height:12.3px;color:#f4f4f4;font-weight:700;">ref_id</div></div>
<div class="a" style="left:1175px;top:1px;width:16px;height:17px;background:#c8c8c8;"></div>
<svg class="a" style="left:1179.5px;top:8px" width="7" height="4" viewBox="0 0 7 4"><path d="M0 0H7L3.5 3.8Z" fill="#5a5a5a"/></svg>
<div class="a" style="left:1192px;top:0px;width:90px;height:19px;overflow:hidden;">
<div class="t" style="left:2px;top:5.19px;font-size:12.3px;line-height:12.3px;color:#f4f4f4;font-weight:700;">component_id</div></div>
<div class="a" style="left:1283px;top:1px;width:16px;height:17px;background:#c8c8c8;"></div>
<svg class="a" style="left:1287.5px;top:8px" width="7" height="4" viewBox="0 0 7 4"><path d="M0 0H7L3.5 3.8Z" fill="#5a5a5a"/></svg>
<div class="a" style="left:1300px;top:0px;width:200px;height:19px;overflow:hidden;">
<div class="t" style="left:2px;top:5.19px;font-size:12.3px;line-height:12.3px;color:#f4f4f4;font-weight:700;">title</div></div>
<div class="a" style="left:0px;top:19px;width:1527px;height:19px;background:#b4c0ab;"></div>
<div class="a" style="left:0px;top:19px;width:84px;height:19px;overflow:hidden;">
<div class="t" style="left:3px;top:5.03px;font-size:12.6px;line-height:12.6px;color:#000;letter-spacing:0px;">Atlas</div></div>
<div class="a" style="left:85px;top:19px;width:143px;height:19px;overflow:hidden;">
<div class="t" style="left:2px;top:5.03px;font-size:12.6px;line-height:12.6px;color:#000;letter-spacing:0px;">Atlas Special Collections</div></div>
<div class="a" style="left:229px;top:19px;width:26px;height:19px;overflow:hidden;">
<div class="t" style="left:3.5px;top:5.03px;font-size:12.6px;line-height:12.6px;color:#000;letter-spacing:0px;">|</div></div>
<div class="t" style="left:-13.50px;width:300px;text-align:right;top:24.03px;font-size:12.6px;line-height:12.6px;color:#000;font-weight:400;">6</div>
<div class="t" style="left:81.50px;width:300px;text-align:right;top:24.03px;font-size:12.6px;line-height:12.6px;color:#000;font-weight:400;">0</div>
<div class="t" style="left:231.50px;width:300px;text-align:right;top:24.03px;font-size:12.6px;line-height:12.6px;color:#000;font-weight:400;">1</div>
<div class="t" style="left:298.50px;width:300px;text-align:right;top:24.03px;font-size:12.6px;line-height:12.6px;color:#000;font-weight:400;">2</div>
<div class="t" style="left:409.50px;width:300px;text-align:right;top:24.03px;font-size:12.6px;line-height:12.6px;color:#000;font-weight:400;">6</div>
<div class="t" style="left:488.50px;width:300px;text-align:right;top:24.03px;font-size:12.6px;line-height:12.6px;color:#000;font-weight:400;">2</div>
<div class="a" style="left:791px;top:19px;width:209px;height:19px;overflow:hidden;">
<div class="t" style="left:2px;top:5.03px;font-size:12.6px;line-height:12.6px;color:#000;letter-spacing:0.2px;">2@archival_object</div></div>
<div class="t" style="left:768.50px;width:300px;text-align:right;top:24.03px;font-size:12.6px;line-height:12.6px;color:#000;font-weight:400;">3000</div>
<div class="t" style="left:833.50px;width:300px;text-align:right;top:24.03px;font-size:12.6px;line-height:12.6px;color:#000;font-weight:400;">1</div>
<div class="a" style="left:1136px;top:19px;width:55px;height:19px;overflow:hidden;">
<div class="t" style="left:2px;top:5.03px;font-size:12.6px;line-height:12.6px;color:#000;letter-spacing:0px;">292606</div></div>
<div class="a" style="left:1192px;top:19px;width:107px;height:19px;overflow:hidden;">
<div class="t" style="left:2px;top:5.03px;font-size:12.6px;line-height:12.6px;color:#000;letter-spacing:0px;">Folder  4</div></div>
<div class="t" style="left:1302.00px;top:24.03px;font-size:12.6px;line-height:12.6px;color:#000;font-weight:400;">From the papers</div>
<div class="a" style="left:0px;top:38px;width:1527px;height:19px;background:#cacaca;"></div>
<div class="a" style="left:84px;top:38px;width:1px;height:19px;background:#b3b3b3;"></div>
<div class="a" style="left:228px;top:38px;width:1px;height:19px;background:#b3b3b3;"></div>
<div class="a" style="left:255px;top:38px;width:1px;height:19px;background:#b3b3b3;"></div>
<div class="a" style="left:288px;top:38px;width:1px;height:19px;background:#b3b3b3;"></div>
<div class="a" style="left:383px;top:38px;width:1px;height:19px;background:#b3b3b3;"></div>
<div class="a" style="left:533px;top:38px;width:1px;height:19px;background:#b3b3b3;"></div>
<div class="a" style="left:600px;top:38px;width:1px;height:19px;background:#b3b3b3;"></div>
<div class="a" style="left:711px;top:38px;width:1px;height:19px;background:#b3b3b3;"></div>
<div class="a" style="left:790px;top:38px;width:1px;height:19px;background:#b3b3b3;"></div>
<div class="a" style="left:1000px;top:38px;width:1px;height:19px;background:#b3b3b3;"></div>
<div class="a" style="left:1070px;top:38px;width:1px;height:19px;background:#b3b3b3;"></div>
<div class="a" style="left:1135px;top:38px;width:1px;height:19px;background:#b3b3b3;"></div>
<div class="a" style="left:1191px;top:38px;width:1px;height:19px;background:#b3b3b3;"></div>
<div class="a" style="left:1299px;top:38px;width:1px;height:19px;background:#b3b3b3;"></div>
<div class="a" style="left:0px;top:38px;width:84px;height:19px;overflow:hidden;">
<div class="t" style="left:3px;top:5.03px;font-size:12.6px;line-height:12.6px;color:#000;letter-spacing:0px;">Atlas</div></div>
<div class="a" style="left:85px;top:38px;width:143px;height:19px;overflow:hidden;">
<div class="t" style="left:2px;top:5.03px;font-size:12.6px;line-height:12.6px;color:#000;letter-spacing:0px;">Atlas Special Collections</div></div>
<div class="a" style="left:229px;top:38px;width:26px;height:19px;overflow:hidden;">
<div class="t" style="left:3.5px;top:5.03px;font-size:12.6px;line-height:12.6px;color:#000;letter-spacing:0px;">|</div></div>
<div class="t" style="left:-13.50px;width:300px;text-align:right;top:43.03px;font-size:12.6px;line-height:12.6px;color:#000;font-weight:400;">8</div>
<div class="t" style="left:81.50px;width:300px;text-align:right;top:43.03px;font-size:12.6px;line-height:12.6px;color:#000;font-weight:400;">0</div>
<div class="t" style="left:231.50px;width:300px;text-align:right;top:43.03px;font-size:12.6px;line-height:12.6px;color:#000;font-weight:400;">1</div>
<div class="t" style="left:298.50px;width:300px;text-align:right;top:43.03px;font-size:12.6px;line-height:12.6px;color:#000;font-weight:400;">2</div>
<div class="t" style="left:409.50px;width:300px;text-align:right;top:43.03px;font-size:12.6px;line-height:12.6px;color:#000;font-weight:400;">6</div>
<div class="t" style="left:488.50px;width:300px;text-align:right;top:43.03px;font-size:12.6px;line-height:12.6px;color:#000;font-weight:400;">2</div>
<div class="a" style="left:791px;top:38px;width:209px;height:19px;overflow:hidden;">
<div class="t" style="left:2px;top:5.03px;font-size:12.6px;line-height:12.6px;color:#000;letter-spacing:0.2px;">2@archival_object</div></div>
<div class="t" style="left:768.50px;width:300px;text-align:right;top:43.03px;font-size:12.6px;line-height:12.6px;color:#000;font-weight:400;">5000</div>
<div class="t" style="left:833.50px;width:300px;text-align:right;top:43.03px;font-size:12.6px;line-height:12.6px;color:#000;font-weight:400;">1</div>
<div class="a" style="left:1136px;top:38px;width:55px;height:19px;overflow:hidden;">
<div class="t" style="left:2px;top:5.03px;font-size:12.6px;line-height:12.6px;color:#000;letter-spacing:0px;">292610</div></div>
<div class="a" style="left:1192px;top:38px;width:107px;height:19px;overflow:hidden;">
<div class="t" style="left:2px;top:5.03px;font-size:12.6px;line-height:12.6px;color:#000;letter-spacing:0px;">Folder  6</div></div>
<div class="t" style="left:1302.00px;top:43.03px;font-size:12.6px;line-height:12.6px;color:#000;font-weight:400;">From the papers</div>
<div class="a" style="left:0px;top:57px;width:1527px;height:19px;background:#b4c0ab;"></div>
<div class="a" style="left:0px;top:57px;width:84px;height:19px;overflow:hidden;">
<div class="t" style="left:3px;top:5.03px;font-size:12.6px;line-height:12.6px;color:#000;letter-spacing:0px;">Atlas</div></div>
<div class="a" style="left:85px;top:57px;width:143px;height:19px;overflow:hidden;">
<div class="t" style="left:2px;top:5.03px;font-size:12.6px;line-height:12.6px;color:#000;letter-spacing:0px;">Atlas Special Collections</div></div>
<div class="a" style="left:229px;top:57px;width:26px;height:19px;overflow:hidden;">
<div class="t" style="left:3.5px;top:5.03px;font-size:12.6px;line-height:12.6px;color:#000;letter-spacing:0px;">|</div></div>
<div class="t" style="left:-13.50px;width:300px;text-align:right;top:62.03px;font-size:12.6px;line-height:12.6px;color:#000;font-weight:400;">12</div>
<div class="t" style="left:81.50px;width:300px;text-align:right;top:62.03px;font-size:12.6px;line-height:12.6px;color:#000;font-weight:400;">0</div>
<div class="t" style="left:231.50px;width:300px;text-align:right;top:62.03px;font-size:12.6px;line-height:12.6px;color:#000;font-weight:400;">1</div>
<div class="t" style="left:298.50px;width:300px;text-align:right;top:62.03px;font-size:12.6px;line-height:12.6px;color:#000;font-weight:400;">2</div>
<div class="t" style="left:409.50px;width:300px;text-align:right;top:62.03px;font-size:12.6px;line-height:12.6px;color:#000;font-weight:400;">9</div>
<div class="a" style="left:791px;top:57px;width:209px;height:19px;overflow:hidden;">
<div class="t" style="left:2px;top:5.03px;font-size:12.6px;line-height:12.6px;color:#000;letter-spacing:0.44px;">root@/repositories/2/resources/9</div></div>
<div class="t" style="left:768.50px;width:300px;text-align:right;top:62.03px;font-size:12.6px;line-height:12.6px;color:#000;font-weight:400;">0</div>
<div class="t" style="left:833.50px;width:300px;text-align:right;top:62.03px;font-size:12.6px;line-height:12.6px;color:#000;font-weight:400;">1</div>
<div class="a" style="left:1136px;top:57px;width:55px;height:19px;overflow:hidden;">
<div class="t" style="left:2px;top:5.03px;font-size:12.6px;line-height:12.6px;color:#000;letter-spacing:0px;">521</div></div>
<div class="a" style="left:1192px;top:57px;width:107px;height:19px;overflow:hidden;">
<div class="t" style="left:2px;top:5.03px;font-size:12.6px;line-height:12.6px;color:#000;letter-spacing:0px;">Item 1</div></div>
<div class="t" style="left:1302.00px;top:62.03px;font-size:12.6px;line-height:12.6px;color:#000;font-weight:400;">Outgoing letters</div>
<div class="a" style="left:0px;top:76px;width:1527px;height:19px;background:#cacaca;"></div>
<div class="a" style="left:84px;top:76px;width:1px;height:19px;background:#b3b3b3;"></div>
<div class="a" style="left:228px;top:76px;width:1px;height:19px;background:#b3b3b3;"></div>
<div class="a" style="left:255px;top:76px;width:1px;height:19px;background:#b3b3b3;"></div>
<div class="a" style="left:288px;top:76px;width:1px;height:19px;background:#b3b3b3;"></div>
<div class="a" style="left:383px;top:76px;width:1px;height:19px;background:#b3b3b3;"></div>
<div class="a" style="left:533px;top:76px;width:1px;height:19px;background:#b3b3b3;"></div>
<div class="a" style="left:600px;top:76px;width:1px;height:19px;background:#b3b3b3;"></div>
<div class="a" style="left:711px;top:76px;width:1px;height:19px;background:#b3b3b3;"></div>
<div class="a" style="left:790px;top:76px;width:1px;height:19px;background:#b3b3b3;"></div>
<div class="a" style="left:1000px;top:76px;width:1px;height:19px;background:#b3b3b3;"></div>
<div class="a" style="left:1070px;top:76px;width:1px;height:19px;background:#b3b3b3;"></div>
<div class="a" style="left:1135px;top:76px;width:1px;height:19px;background:#b3b3b3;"></div>
<div class="a" style="left:1191px;top:76px;width:1px;height:19px;background:#b3b3b3;"></div>
<div class="a" style="left:1299px;top:76px;width:1px;height:19px;background:#b3b3b3;"></div>
<div class="a" style="left:0px;top:76px;width:84px;height:19px;overflow:hidden;">
<div class="t" style="left:3px;top:5.03px;font-size:12.6px;line-height:12.6px;color:#000;letter-spacing:0px;">Atlas</div></div>
<div class="a" style="left:85px;top:76px;width:143px;height:19px;overflow:hidden;">
<div class="t" style="left:2px;top:5.03px;font-size:12.6px;line-height:12.6px;color:#000;letter-spacing:0px;">Atlas Special Collections</div></div>
<div class="a" style="left:229px;top:76px;width:26px;height:19px;overflow:hidden;">
<div class="t" style="left:3.5px;top:5.03px;font-size:12.6px;line-height:12.6px;color:#000;letter-spacing:0px;">|</div></div>
<div class="t" style="left:-13.50px;width:300px;text-align:right;top:81.03px;font-size:12.6px;line-height:12.6px;color:#000;font-weight:400;">13</div>
<div class="t" style="left:81.50px;width:300px;text-align:right;top:81.03px;font-size:12.6px;line-height:12.6px;color:#000;font-weight:400;">0</div>
<div class="t" style="left:231.50px;width:300px;text-align:right;top:81.03px;font-size:12.6px;line-height:12.6px;color:#000;font-weight:400;">1</div>
<div class="t" style="left:298.50px;width:300px;text-align:right;top:81.03px;font-size:12.6px;line-height:12.6px;color:#000;font-weight:400;">2</div>
<div class="t" style="left:409.50px;width:300px;text-align:right;top:81.03px;font-size:12.6px;line-height:12.6px;color:#000;font-weight:400;">9</div>
<div class="a" style="left:791px;top:76px;width:209px;height:19px;overflow:hidden;">
<div class="t" style="left:2px;top:5.03px;font-size:12.6px;line-height:12.6px;color:#000;letter-spacing:0.44px;">root@/repositories/2/resources/9</div></div>
<div class="t" style="left:768.50px;width:300px;text-align:right;top:81.03px;font-size:12.6px;line-height:12.6px;color:#000;font-weight:400;">1000</div>
<div class="t" style="left:833.50px;width:300px;text-align:right;top:81.03px;font-size:12.6px;line-height:12.6px;color:#000;font-weight:400;">1</div>
<div class="a" style="left:1136px;top:76px;width:55px;height:19px;overflow:hidden;">
<div class="t" style="left:2px;top:5.03px;font-size:12.6px;line-height:12.6px;color:#000;letter-spacing:0px;">522</div></div>
<div class="a" style="left:1192px;top:76px;width:107px;height:19px;overflow:hidden;">
<div class="t" style="left:2px;top:5.03px;font-size:12.6px;line-height:12.6px;color:#000;letter-spacing:0px;">Item 2</div></div>
<div class="t" style="left:1302.00px;top:81.03px;font-size:12.6px;line-height:12.6px;color:#000;font-weight:400;">Outgoing letters</div>
<div class="a" style="left:0px;top:95px;width:1527px;height:19px;background:#b4c0ab;"></div>
<div class="a" style="left:0px;top:95px;width:84px;height:19px;overflow:hidden;">
<div class="t" style="left:3px;top:5.03px;font-size:12.6px;line-height:12.6px;color:#000;letter-spacing:0px;">Atlas</div></div>
<div class="a" style="left:85px;top:95px;width:143px;height:19px;overflow:hidden;">
<div class="t" style="left:2px;top:5.03px;font-size:12.6px;line-height:12.6px;color:#000;letter-spacing:0px;">Atlas Special Collections</div></div>
<div class="a" style="left:229px;top:95px;width:26px;height:19px;overflow:hidden;">
<div class="t" style="left:3.5px;top:5.03px;font-size:12.6px;line-height:12.6px;color:#000;letter-spacing:0px;">|</div></div>
<div class="t" style="left:-13.50px;width:300px;text-align:right;top:100.03px;font-size:12.6px;line-height:12.6px;color:#000;font-weight:400;">14</div>
<div class="t" style="left:81.50px;width:300px;text-align:right;top:100.03px;font-size:12.6px;line-height:12.6px;color:#000;font-weight:400;">0</div>
<div class="t" style="left:231.50px;width:300px;text-align:right;top:100.03px;font-size:12.6px;line-height:12.6px;color:#000;font-weight:400;">1</div>
<div class="t" style="left:298.50px;width:300px;text-align:right;top:100.03px;font-size:12.6px;line-height:12.6px;color:#000;font-weight:400;">2</div>
<div class="t" style="left:409.50px;width:300px;text-align:right;top:100.03px;font-size:12.6px;line-height:12.6px;color:#000;font-weight:400;">9</div>
<div class="a" style="left:791px;top:95px;width:209px;height:19px;overflow:hidden;">
<div class="t" style="left:2px;top:5.03px;font-size:12.6px;line-height:12.6px;color:#000;letter-spacing:0.44px;">root@/repositories/2/resources/9</div></div>
<div class="t" style="left:768.50px;width:300px;text-align:right;top:100.03px;font-size:12.6px;line-height:12.6px;color:#000;font-weight:400;">2000</div>
<div class="t" style="left:833.50px;width:300px;text-align:right;top:100.03px;font-size:12.6px;line-height:12.6px;color:#000;font-weight:400;">1</div>
<div class="a" style="left:1136px;top:95px;width:55px;height:19px;overflow:hidden;">
<div class="t" style="left:2px;top:5.03px;font-size:12.6px;line-height:12.6px;color:#000;letter-spacing:0px;">523</div></div>
<div class="a" style="left:1192px;top:95px;width:107px;height:19px;overflow:hidden;">
<div class="t" style="left:2px;top:5.03px;font-size:12.6px;line-height:12.6px;color:#000;letter-spacing:0px;">Item 3</div></div>
<div class="t" style="left:1302.00px;top:100.03px;font-size:12.6px;line-height:12.6px;color:#000;font-weight:400;">Outgoing letters</div>
<div class="a" style="left:0px;top:114px;width:1527px;height:19px;background:#cacaca;"></div>
<div class="a" style="left:84px;top:114px;width:1px;height:19px;background:#b3b3b3;"></div>
<div class="a" style="left:228px;top:114px;width:1px;height:19px;background:#b3b3b3;"></div>
<div class="a" style="left:255px;top:114px;width:1px;height:19px;background:#b3b3b3;"></div>
<div class="a" style="left:288px;top:114px;width:1px;height:19px;background:#b3b3b3;"></div>
<div class="a" style="left:383px;top:114px;width:1px;height:19px;background:#b3b3b3;"></div>
<div class="a" style="left:533px;top:114px;width:1px;height:19px;background:#b3b3b3;"></div>
<div class="a" style="left:600px;top:114px;width:1px;height:19px;background:#b3b3b3;"></div>
<div class="a" style="left:711px;top:114px;width:1px;height:19px;background:#b3b3b3;"></div>
<div class="a" style="left:790px;top:114px;width:1px;height:19px;background:#b3b3b3;"></div>
<div class="a" style="left:1000px;top:114px;width:1px;height:19px;background:#b3b3b3;"></div>
<div class="a" style="left:1070px;top:114px;width:1px;height:19px;background:#b3b3b3;"></div>
<div class="a" style="left:1135px;top:114px;width:1px;height:19px;background:#b3b3b3;"></div>
<div class="a" style="left:1191px;top:114px;width:1px;height:19px;background:#b3b3b3;"></div>
<div class="a" style="left:1299px;top:114px;width:1px;height:19px;background:#b3b3b3;"></div>
<div class="a" style="left:0px;top:114px;width:84px;height:19px;overflow:hidden;">
<div class="t" style="left:3px;top:5.03px;font-size:12.6px;line-height:12.6px;color:#000;letter-spacing:0px;">Atlas</div></div>
<div class="a" style="left:85px;top:114px;width:143px;height:19px;overflow:hidden;">
<div class="t" style="left:2px;top:5.03px;font-size:12.6px;line-height:12.6px;color:#000;letter-spacing:0px;">Atlas Special Collections</div></div>
<div class="a" style="left:229px;top:114px;width:26px;height:19px;overflow:hidden;">
<div class="t" style="left:3.5px;top:5.03px;font-size:12.6px;line-height:12.6px;color:#000;letter-spacing:0px;">|</div></div>
<div class="t" style="left:-13.50px;width:300px;text-align:right;top:119.03px;font-size:12.6px;line-height:12.6px;color:#000;font-weight:400;">15</div>
<div class="t" style="left:81.50px;width:300px;text-align:right;top:119.03px;font-size:12.6px;line-height:12.6px;color:#000;font-weight:400;">0</div>
<div class="t" style="left:231.50px;width:300px;text-align:right;top:119.03px;font-size:12.6px;line-height:12.6px;color:#000;font-weight:400;">1</div>
<div class="t" style="left:298.50px;width:300px;text-align:right;top:119.03px;font-size:12.6px;line-height:12.6px;color:#000;font-weight:400;">2</div>
<div class="t" style="left:409.50px;width:300px;text-align:right;top:119.03px;font-size:12.6px;line-height:12.6px;color:#000;font-weight:400;">9</div>
<div class="a" style="left:791px;top:114px;width:209px;height:19px;overflow:hidden;">
<div class="t" style="left:2px;top:5.03px;font-size:12.6px;line-height:12.6px;color:#000;letter-spacing:0.44px;">root@/repositories/2/resources/9</div></div>
<div class="t" style="left:768.50px;width:300px;text-align:right;top:119.03px;font-size:12.6px;line-height:12.6px;color:#000;font-weight:400;">3000</div>
<div class="t" style="left:833.50px;width:300px;text-align:right;top:119.03px;font-size:12.6px;line-height:12.6px;color:#000;font-weight:400;">1</div>
<div class="a" style="left:1136px;top:114px;width:55px;height:19px;overflow:hidden;">
<div class="t" style="left:2px;top:5.03px;font-size:12.6px;line-height:12.6px;color:#000;letter-spacing:0px;">524</div></div>
<div class="a" style="left:1192px;top:114px;width:107px;height:19px;overflow:hidden;">
<div class="t" style="left:2px;top:5.03px;font-size:12.6px;line-height:12.6px;color:#000;letter-spacing:0px;">Item 4</div></div>
<div class="t" style="left:1302.00px;top:119.03px;font-size:12.6px;line-height:12.6px;color:#000;font-weight:400;">Outgoing letters</div>
<div class="a" style="left:0px;top:133px;width:1527px;height:19px;background:#b4c0ab;"></div>
<div class="a" style="left:0px;top:133px;width:84px;height:19px;overflow:hidden;">
<div class="t" style="left:3px;top:5.03px;font-size:12.6px;line-height:12.6px;color:#000;letter-spacing:0px;">Atlas</div></div>
<div class="a" style="left:85px;top:133px;width:143px;height:19px;overflow:hidden;">
<div class="t" style="left:2px;top:5.03px;font-size:12.6px;line-height:12.6px;color:#000;letter-spacing:0px;">Atlas Special Collections</div></div>
<div class="a" style="left:229px;top:133px;width:26px;height:19px;overflow:hidden;">
<div class="t" style="left:3.5px;top:5.03px;font-size:12.6px;line-height:12.6px;color:#000;letter-spacing:0px;">|</div></div>
<div class="t" style="left:-13.50px;width:300px;text-align:right;top:138.03px;font-size:12.6px;line-height:12.6px;color:#000;font-weight:400;">16</div>
<div class="t" style="left:81.50px;width:300px;text-align:right;top:138.03px;font-size:12.6px;line-height:12.6px;color:#000;font-weight:400;">0</div>
<div class="t" style="left:231.50px;width:300px;text-align:right;top:138.03px;font-size:12.6px;line-height:12.6px;color:#000;font-weight:400;">1</div>
<div class="t" style="left:298.50px;width:300px;text-align:right;top:138.03px;font-size:12.6px;line-height:12.6px;color:#000;font-weight:400;">2</div>
<div class="t" style="left:409.50px;width:300px;text-align:right;top:138.03px;font-size:12.6px;line-height:12.6px;color:#000;font-weight:400;">9</div>
<div class="a" style="left:791px;top:133px;width:209px;height:19px;overflow:hidden;">
<div class="t" style="left:2px;top:5.03px;font-size:12.6px;line-height:12.6px;color:#000;letter-spacing:0.44px;">root@/repositories/2/resources/9</div></div>
<div class="t" style="left:768.50px;width:300px;text-align:right;top:138.03px;font-size:12.6px;line-height:12.6px;color:#000;font-weight:400;">4000</div>
<div class="t" style="left:833.50px;width:300px;text-align:right;top:138.03px;font-size:12.6px;line-height:12.6px;color:#000;font-weight:400;">1</div>
<div class="a" style="left:1136px;top:133px;width:55px;height:19px;overflow:hidden;">
<div class="t" style="left:2px;top:5.03px;font-size:12.6px;line-height:12.6px;color:#000;letter-spacing:0px;">525</div></div>
<div class="a" style="left:1192px;top:133px;width:107px;height:19px;overflow:hidden;">
<div class="t" style="left:2px;top:5.03px;font-size:12.6px;line-height:12.6px;color:#000;letter-spacing:0px;">Item 5</div></div>
<div class="t" style="left:1302.00px;top:138.03px;font-size:12.6px;line-height:12.6px;color:#000;font-weight:400;">Outgoing letters</div>
<div class="a" style="left:0px;top:152px;width:1527px;height:19px;background:#cacaca;"></div>
<div class="a" style="left:84px;top:152px;width:1px;height:19px;background:#b3b3b3;"></div>
<div class="a" style="left:228px;top:152px;width:1px;height:19px;background:#b3b3b3;"></div>
<div class="a" style="left:255px;top:152px;width:1px;height:19px;background:#b3b3b3;"></div>
<div class="a" style="left:288px;top:152px;width:1px;height:19px;background:#b3b3b3;"></div>
<div class="a" style="left:383px;top:152px;width:1px;height:19px;background:#b3b3b3;"></div>
<div class="a" style="left:533px;top:152px;width:1px;height:19px;background:#b3b3b3;"></div>
<div class="a" style="left:600px;top:152px;width:1px;height:19px;background:#b3b3b3;"></div>
<div class="a" style="left:711px;top:152px;width:1px;height:19px;background:#b3b3b3;"></div>
<div class="a" style="left:790px;top:152px;width:1px;height:19px;background:#b3b3b3;"></div>
<div class="a" style="left:1000px;top:152px;width:1px;height:19px;background:#b3b3b3;"></div>
<div class="a" style="left:1070px;top:152px;width:1px;height:19px;background:#b3b3b3;"></div>
<div class="a" style="left:1135px;top:152px;width:1px;height:19px;background:#b3b3b3;"></div>
<div class="a" style="left:1191px;top:152px;width:1px;height:19px;background:#b3b3b3;"></div>
<div class="a" style="left:1299px;top:152px;width:1px;height:19px;background:#b3b3b3;"></div>
<div class="a" style="left:0px;top:152px;width:84px;height:19px;overflow:hidden;">
<div class="t" style="left:3px;top:5.03px;font-size:12.6px;line-height:12.6px;color:#000;letter-spacing:0px;">Atlas</div></div>
<div class="a" style="left:85px;top:152px;width:143px;height:19px;overflow:hidden;">
<div class="t" style="left:2px;top:5.03px;font-size:12.6px;line-height:12.6px;color:#000;letter-spacing:0px;">Atlas Special Collections</div></div>
<div class="a" style="left:229px;top:152px;width:26px;height:19px;overflow:hidden;">
<div class="t" style="left:3.5px;top:5.03px;font-size:12.6px;line-height:12.6px;color:#000;letter-spacing:0px;">|</div></div>
<div class="t" style="left:-13.50px;width:300px;text-align:right;top:157.03px;font-size:12.6px;line-height:12.6px;color:#000;font-weight:400;">17</div>
<div class="t" style="left:81.50px;width:300px;text-align:right;top:157.03px;font-size:12.6px;line-height:12.6px;color:#000;font-weight:400;">0</div>
<div class="t" style="left:231.50px;width:300px;text-align:right;top:157.03px;font-size:12.6px;line-height:12.6px;color:#000;font-weight:400;">1</div>
<div class="t" style="left:298.50px;width:300px;text-align:right;top:157.03px;font-size:12.6px;line-height:12.6px;color:#000;font-weight:400;">2</div>
<div class="t" style="left:409.50px;width:300px;text-align:right;top:157.03px;font-size:12.6px;line-height:12.6px;color:#000;font-weight:400;">9</div>
<div class="a" style="left:791px;top:152px;width:209px;height:19px;overflow:hidden;">
<div class="t" style="left:2px;top:5.03px;font-size:12.6px;line-height:12.6px;color:#000;letter-spacing:0.44px;">root@/repositories/2/resources/9</div></div>
<div class="t" style="left:768.50px;width:300px;text-align:right;top:157.03px;font-size:12.6px;line-height:12.6px;color:#000;font-weight:400;">5000</div>
<div class="t" style="left:833.50px;width:300px;text-align:right;top:157.03px;font-size:12.6px;line-height:12.6px;color:#000;font-weight:400;">1</div>
<div class="a" style="left:1136px;top:152px;width:55px;height:19px;overflow:hidden;">
<div class="t" style="left:2px;top:5.03px;font-size:12.6px;line-height:12.6px;color:#000;letter-spacing:0px;">526</div></div>
<div class="a" style="left:1192px;top:152px;width:107px;height:19px;overflow:hidden;">
<div class="t" style="left:2px;top:5.03px;font-size:12.6px;line-height:12.6px;color:#000;letter-spacing:0px;">Item 6</div></div>
<div class="t" style="left:1302.00px;top:157.03px;font-size:12.6px;line-height:12.6px;color:#000;font-weight:400;">Outgoing letters</div>
<div class="a" style="left:0px;top:171px;width:1527px;height:19px;background:#b4c0ab;"></div>
<div class="a" style="left:0px;top:171px;width:84px;height:19px;overflow:hidden;">
<div class="t" style="left:3px;top:5.03px;font-size:12.6px;line-height:12.6px;color:#000;letter-spacing:0px;">Atlas</div></div>
<div class="a" style="left:85px;top:171px;width:143px;height:19px;overflow:hidden;">
<div class="t" style="left:2px;top:5.03px;font-size:12.6px;line-height:12.6px;color:#000;letter-spacing:0px;">Atlas Special Collections</div></div>
<div class="a" style="left:229px;top:171px;width:26px;height:19px;overflow:hidden;">
<div class="t" style="left:3.5px;top:5.03px;font-size:12.6px;line-height:12.6px;color:#000;letter-spacing:0px;">|</div></div>
<div class="t" style="left:-13.50px;width:300px;text-align:right;top:176.03px;font-size:12.6px;line-height:12.6px;color:#000;font-weight:400;">18</div>
<div class="t" style="left:81.50px;width:300px;text-align:right;top:176.03px;font-size:12.6px;line-height:12.6px;color:#000;font-weight:400;">0</div>
<div class="t" style="left:231.50px;width:300px;text-align:right;top:176.03px;font-size:12.6px;line-height:12.6px;color:#000;font-weight:400;">1</div>
<div class="t" style="left:298.50px;width:300px;text-align:right;top:176.03px;font-size:12.6px;line-height:12.6px;color:#000;font-weight:400;">2</div>
<div class="t" style="left:409.50px;width:300px;text-align:right;top:176.03px;font-size:12.6px;line-height:12.6px;color:#000;font-weight:400;">9</div>
<div class="a" style="left:791px;top:171px;width:209px;height:19px;overflow:hidden;">
<div class="t" style="left:2px;top:5.03px;font-size:12.6px;line-height:12.6px;color:#000;letter-spacing:0.44px;">root@/repositories/2/resources/9</div></div>
<div class="t" style="left:768.50px;width:300px;text-align:right;top:176.03px;font-size:12.6px;line-height:12.6px;color:#000;font-weight:400;">6000</div>
<div class="t" style="left:833.50px;width:300px;text-align:right;top:176.03px;font-size:12.6px;line-height:12.6px;color:#000;font-weight:400;">1</div>
<div class="a" style="left:1136px;top:171px;width:55px;height:19px;overflow:hidden;">
<div class="t" style="left:2px;top:5.03px;font-size:12.6px;line-height:12.6px;color:#000;letter-spacing:0px;">527</div></div>
<div class="a" style="left:1192px;top:171px;width:107px;height:19px;overflow:hidden;">
<div class="t" style="left:2px;top:5.03px;font-size:12.6px;line-height:12.6px;color:#000;letter-spacing:0px;">Item 7</div></div>
<div class="t" style="left:1302.00px;top:176.03px;font-size:12.6px;line-height:12.6px;color:#000;font-weight:400;">Outgoing letters</div>
<div class="a" style="left:0px;top:190px;width:1527px;height:19px;background:#cacaca;"></div>
<div class="a" style="left:84px;top:190px;width:1px;height:19px;background:#b3b3b3;"></div>
<div class="a" style="left:228px;top:190px;width:1px;height:19px;background:#b3b3b3;"></div>
<div class="a" style="left:255px;top:190px;width:1px;height:19px;background:#b3b3b3;"></div>
<div class="a" style="left:288px;top:190px;width:1px;height:19px;background:#b3b3b3;"></div>
<div class="a" style="left:383px;top:190px;width:1px;height:19px;background:#b3b3b3;"></div>
<div class="a" style="left:533px;top:190px;width:1px;height:19px;background:#b3b3b3;"></div>
<div class="a" style="left:600px;top:190px;width:1px;height:19px;background:#b3b3b3;"></div>
<div class="a" style="left:711px;top:190px;width:1px;height:19px;background:#b3b3b3;"></div>
<div class="a" style="left:790px;top:190px;width:1px;height:19px;background:#b3b3b3;"></div>
<div class="a" style="left:1000px;top:190px;width:1px;height:19px;background:#b3b3b3;"></div>
<div class="a" style="left:1070px;top:190px;width:1px;height:19px;background:#b3b3b3;"></div>
<div class="a" style="left:1135px;top:190px;width:1px;height:19px;background:#b3b3b3;"></div>
<div class="a" style="left:1191px;top:190px;width:1px;height:19px;background:#b3b3b3;"></div>
<div class="a" style="left:1299px;top:190px;width:1px;height:19px;background:#b3b3b3;"></div>
<div class="a" style="left:0px;top:190px;width:84px;height:19px;overflow:hidden;">
<div class="t" style="left:3px;top:5.03px;font-size:12.6px;line-height:12.6px;color:#000;letter-spacing:0px;">Atlas</div></div>
<div class="a" style="left:85px;top:190px;width:143px;height:19px;overflow:hidden;">
<div class="t" style="left:2px;top:5.03px;font-size:12.6px;line-height:12.6px;color:#000;letter-spacing:0px;">Atlas Special Collections</div></div>
<div class="a" style="left:229px;top:190px;width:26px;height:19px;overflow:hidden;">
<div class="t" style="left:3.5px;top:5.03px;font-size:12.6px;line-height:12.6px;color:#000;letter-spacing:0px;">|</div></div>
<div class="t" style="left:-13.50px;width:300px;text-align:right;top:195.03px;font-size:12.6px;line-height:12.6px;color:#000;font-weight:400;">19</div>
<div class="t" style="left:81.50px;width:300px;text-align:right;top:195.03px;font-size:12.6px;line-height:12.6px;color:#000;font-weight:400;">0</div>
<div class="t" style="left:231.50px;width:300px;text-align:right;top:195.03px;font-size:12.6px;line-height:12.6px;color:#000;font-weight:400;">1</div>
<div class="t" style="left:298.50px;width:300px;text-align:right;top:195.03px;font-size:12.6px;line-height:12.6px;color:#000;font-weight:400;">2</div>
<div class="t" style="left:409.50px;width:300px;text-align:right;top:195.03px;font-size:12.6px;line-height:12.6px;color:#000;font-weight:400;">9</div>
<div class="a" style="left:791px;top:190px;width:209px;height:19px;overflow:hidden;">
<div class="t" style="left:2px;top:5.03px;font-size:12.6px;line-height:12.6px;color:#000;letter-spacing:0.44px;">root@/repositories/2/resources/9</div></div>
<div class="t" style="left:768.50px;width:300px;text-align:right;top:195.03px;font-size:12.6px;line-height:12.6px;color:#000;font-weight:400;">7000</div>
<div class="t" style="left:833.50px;width:300px;text-align:right;top:195.03px;font-size:12.6px;line-height:12.6px;color:#000;font-weight:400;">1</div>
<div class="a" style="left:1136px;top:190px;width:55px;height:19px;overflow:hidden;">
<div class="t" style="left:2px;top:5.03px;font-size:12.6px;line-height:12.6px;color:#000;letter-spacing:0px;">528</div></div>
<div class="a" style="left:1192px;top:190px;width:107px;height:19px;overflow:hidden;">
<div class="t" style="left:2px;top:5.03px;font-size:12.6px;line-height:12.6px;color:#000;letter-spacing:0px;">Item 8</div></div>
<div class="t" style="left:1302.00px;top:195.03px;font-size:12.6px;line-height:12.6px;color:#000;font-weight:400;">Outgoing letters</div>
<div class="a" style="left:0px;top:209px;width:1527px;height:19px;background:#b4c0ab;"></div>
<div class="a" style="left:0px;top:209px;width:84px;height:19px;overflow:hidden;">
<div class="t" style="left:3px;top:5.03px;font-size:12.6px;line-height:12.6px;color:#000;letter-spacing:0px;">Atlas</div></div>
<div class="a" style="left:85px;top:209px;width:143px;height:19px;overflow:hidden;">
<div class="t" style="left:2px;top:5.03px;font-size:12.6px;line-height:12.6px;color:#000;letter-spacing:0px;">Atlas Special Collections</div></div>
<div class="a" style="left:229px;top:209px;width:26px;height:19px;overflow:hidden;">
<div class="t" style="left:3.5px;top:5.03px;font-size:12.6px;line-height:12.6px;color:#000;letter-spacing:0px;">|</div></div>
<div class="t" style="left:-13.50px;width:300px;text-align:right;top:214.03px;font-size:12.6px;line-height:12.6px;color:#000;font-weight:400;">20</div>
<div class="t" style="left:81.50px;width:300px;text-align:right;top:214.03px;font-size:12.6px;line-height:12.6px;color:#000;font-weight:400;">0</div>
<div class="t" style="left:231.50px;width:300px;text-align:right;top:214.03px;font-size:12.6px;line-height:12.6px;color:#000;font-weight:400;">1</div>
<div class="t" style="left:298.50px;width:300px;text-align:right;top:214.03px;font-size:12.6px;line-height:12.6px;color:#000;font-weight:400;">2</div>
<div class="t" style="left:409.50px;width:300px;text-align:right;top:214.03px;font-size:12.6px;line-height:12.6px;color:#000;font-weight:400;">9</div>
<div class="a" style="left:791px;top:209px;width:209px;height:19px;overflow:hidden;">
<div class="t" style="left:2px;top:5.03px;font-size:12.6px;line-height:12.6px;color:#000;letter-spacing:0.44px;">root@/repositories/2/resources/9</div></div>
<div class="t" style="left:768.50px;width:300px;text-align:right;top:214.03px;font-size:12.6px;line-height:12.6px;color:#000;font-weight:400;">8000</div>
<div class="t" style="left:833.50px;width:300px;text-align:right;top:214.03px;font-size:12.6px;line-height:12.6px;color:#000;font-weight:400;">1</div>
<div class="a" style="left:1136px;top:209px;width:55px;height:19px;overflow:hidden;">
<div class="t" style="left:2px;top:5.03px;font-size:12.6px;line-height:12.6px;color:#000;letter-spacing:0px;">529</div></div>
<div class="a" style="left:1192px;top:209px;width:107px;height:19px;overflow:hidden;">
<div class="t" style="left:2px;top:5.03px;font-size:12.6px;line-height:12.6px;color:#000;letter-spacing:0px;">Item 9</div></div>
<div class="t" style="left:1302.00px;top:214.03px;font-size:12.6px;line-height:12.6px;color:#000;font-weight:400;">Outgoing letters</div>
<div class="a" style="left:0px;top:228px;width:1527px;height:19px;background:#cacaca;"></div>
<div class="a" style="left:84px;top:228px;width:1px;height:19px;background:#b3b3b3;"></div>
<div class="a" style="left:228px;top:228px;width:1px;height:19px;background:#b3b3b3;"></div>
<div class="a" style="left:255px;top:228px;width:1px;height:19px;background:#b3b3b3;"></div>
<div class="a" style="left:288px;top:228px;width:1px;height:19px;background:#b3b3b3;"></div>
<div class="a" style="left:383px;top:228px;width:1px;height:19px;background:#b3b3b3;"></div>
<div class="a" style="left:533px;top:228px;width:1px;height:19px;background:#b3b3b3;"></div>
<div class="a" style="left:600px;top:228px;width:1px;height:19px;background:#b3b3b3;"></div>
<div class="a" style="left:711px;top:228px;width:1px;height:19px;background:#b3b3b3;"></div>
<div class="a" style="left:790px;top:228px;width:1px;height:19px;background:#b3b3b3;"></div>
<div class="a" style="left:1000px;top:228px;width:1px;height:19px;background:#b3b3b3;"></div>
<div class="a" style="left:1070px;top:228px;width:1px;height:19px;background:#b3b3b3;"></div>
<div class="a" style="left:1135px;top:228px;width:1px;height:19px;background:#b3b3b3;"></div>
<div class="a" style="left:1191px;top:228px;width:1px;height:19px;background:#b3b3b3;"></div>
<div class="a" style="left:1299px;top:228px;width:1px;height:19px;background:#b3b3b3;"></div>
<div class="a" style="left:0px;top:228px;width:84px;height:19px;overflow:hidden;">
<div class="t" style="left:3px;top:5.03px;font-size:12.6px;line-height:12.6px;color:#000;letter-spacing:0px;">Atlas</div></div>
<div class="a" style="left:85px;top:228px;width:143px;height:19px;overflow:hidden;">
<div class="t" style="left:2px;top:5.03px;font-size:12.6px;line-height:12.6px;color:#000;letter-spacing:0px;">Atlas Special Collections</div></div>
<div class="a" style="left:229px;top:228px;width:26px;height:19px;overflow:hidden;">
<div class="t" style="left:3.5px;top:5.03px;font-size:12.6px;line-height:12.6px;color:#000;letter-spacing:0px;">|</div></div>
<div class="t" style="left:-13.50px;width:300px;text-align:right;top:233.03px;font-size:12.6px;line-height:12.6px;color:#000;font-weight:400;">21</div>
<div class="t" style="left:81.50px;width:300px;text-align:right;top:233.03px;font-size:12.6px;line-height:12.6px;color:#000;font-weight:400;">0</div>
<div class="t" style="left:231.50px;width:300px;text-align:right;top:233.03px;font-size:12.6px;line-height:12.6px;color:#000;font-weight:400;">1</div>
<div class="t" style="left:298.50px;width:300px;text-align:right;top:233.03px;font-size:12.6px;line-height:12.6px;color:#000;font-weight:400;">2</div>
<div class="t" style="left:409.50px;width:300px;text-align:right;top:233.03px;font-size:12.6px;line-height:12.6px;color:#000;font-weight:400;">9</div>
<div class="a" style="left:791px;top:228px;width:209px;height:19px;overflow:hidden;">
<div class="t" style="left:2px;top:5.03px;font-size:12.6px;line-height:12.6px;color:#000;letter-spacing:0.44px;">root@/repositories/2/resources/9</div></div>
<div class="t" style="left:768.50px;width:300px;text-align:right;top:233.03px;font-size:12.6px;line-height:12.6px;color:#000;font-weight:400;">9000</div>
<div class="t" style="left:833.50px;width:300px;text-align:right;top:233.03px;font-size:12.6px;line-height:12.6px;color:#000;font-weight:400;">1</div>
<div class="a" style="left:1136px;top:228px;width:55px;height:19px;overflow:hidden;">
<div class="t" style="left:2px;top:5.03px;font-size:12.6px;line-height:12.6px;color:#000;letter-spacing:0px;">530</div></div>
<div class="a" style="left:1192px;top:228px;width:107px;height:19px;overflow:hidden;">
<div class="t" style="left:2px;top:5.03px;font-size:12.6px;line-height:12.6px;color:#000;letter-spacing:0px;">Item 10</div></div>
<div class="t" style="left:1302.00px;top:233.03px;font-size:12.6px;line-height:12.6px;color:#000;font-weight:400;">Outgoing letters</div>
<div class="a" style="left:0px;top:247px;width:1527px;height:19px;background:#b4c0ab;"></div>
<div class="a" style="left:0px;top:247px;width:84px;height:19px;overflow:hidden;">
<div class="t" style="left:3px;top:5.03px;font-size:12.6px;line-height:12.6px;color:#000;letter-spacing:0px;">Atlas</div></div>
<div class="a" style="left:85px;top:247px;width:143px;height:19px;overflow:hidden;">
<div class="t" style="left:2px;top:5.03px;font-size:12.6px;line-height:12.6px;color:#000;letter-spacing:0px;">Atlas Special Collections</div></div>
<div class="a" style="left:229px;top:247px;width:26px;height:19px;overflow:hidden;">
<div class="t" style="left:3.5px;top:5.03px;font-size:12.6px;line-height:12.6px;color:#000;letter-spacing:0px;">|</div></div>
<div class="t" style="left:-13.50px;width:300px;text-align:right;top:252.03px;font-size:12.6px;line-height:12.6px;color:#000;font-weight:400;">22</div>
<div class="t" style="left:81.50px;width:300px;text-align:right;top:252.03px;font-size:12.6px;line-height:12.6px;color:#000;font-weight:400;">0</div>
<div class="t" style="left:231.50px;width:300px;text-align:right;top:252.03px;font-size:12.6px;line-height:12.6px;color:#000;font-weight:400;">1</div>
<div class="t" style="left:298.50px;width:300px;text-align:right;top:252.03px;font-size:12.6px;line-height:12.6px;color:#000;font-weight:400;">2</div>
<div class="t" style="left:409.50px;width:300px;text-align:right;top:252.03px;font-size:12.6px;line-height:12.6px;color:#000;font-weight:400;">9</div>
<div class="a" style="left:791px;top:247px;width:209px;height:19px;overflow:hidden;">
<div class="t" style="left:2px;top:5.03px;font-size:12.6px;line-height:12.6px;color:#000;letter-spacing:0.44px;">root@/repositories/2/resources/9</div></div>
<div class="t" style="left:768.50px;width:300px;text-align:right;top:252.03px;font-size:12.6px;line-height:12.6px;color:#000;font-weight:400;">10000</div>
<div class="t" style="left:833.50px;width:300px;text-align:right;top:252.03px;font-size:12.6px;line-height:12.6px;color:#000;font-weight:400;">1</div>
<div class="a" style="left:1136px;top:247px;width:55px;height:19px;overflow:hidden;">
<div class="t" style="left:2px;top:5.03px;font-size:12.6px;line-height:12.6px;color:#000;letter-spacing:0px;">531</div></div>
<div class="a" style="left:1192px;top:247px;width:107px;height:19px;overflow:hidden;">
<div class="t" style="left:2px;top:5.03px;font-size:12.6px;line-height:12.6px;color:#000;letter-spacing:0px;">Item 11</div></div>
<div class="t" style="left:1302.00px;top:252.03px;font-size:12.6px;line-height:12.6px;color:#000;font-weight:400;">Outgoing letters</div>
<div class="a" style="left:0px;top:266px;width:1527px;height:19px;background:#cacaca;"></div>
<div class="a" style="left:84px;top:266px;width:1px;height:19px;background:#b3b3b3;"></div>
<div class="a" style="left:228px;top:266px;width:1px;height:19px;background:#b3b3b3;"></div>
<div class="a" style="left:255px;top:266px;width:1px;height:19px;background:#b3b3b3;"></div>
<div class="a" style="left:288px;top:266px;width:1px;height:19px;background:#b3b3b3;"></div>
<div class="a" style="left:383px;top:266px;width:1px;height:19px;background:#b3b3b3;"></div>
<div class="a" style="left:533px;top:266px;width:1px;height:19px;background:#b3b3b3;"></div>
<div class="a" style="left:600px;top:266px;width:1px;height:19px;background:#b3b3b3;"></div>
<div class="a" style="left:711px;top:266px;width:1px;height:19px;background:#b3b3b3;"></div>
<div class="a" style="left:790px;top:266px;width:1px;height:19px;background:#b3b3b3;"></div>
<div class="a" style="left:1000px;top:266px;width:1px;height:19px;background:#b3b3b3;"></div>
<div class="a" style="left:1070px;top:266px;width:1px;height:19px;background:#b3b3b3;"></div>
<div class="a" style="left:1135px;top:266px;width:1px;height:19px;background:#b3b3b3;"></div>
<div class="a" style="left:1191px;top:266px;width:1px;height:19px;background:#b3b3b3;"></div>
<div class="a" style="left:1299px;top:266px;width:1px;height:19px;background:#b3b3b3;"></div>
<div class="a" style="left:0px;top:266px;width:84px;height:19px;overflow:hidden;">
<div class="t" style="left:3px;top:5.03px;font-size:12.6px;line-height:12.6px;color:#000;letter-spacing:0px;">Atlas</div></div>
<div class="a" style="left:85px;top:266px;width:143px;height:19px;overflow:hidden;">
<div class="t" style="left:2px;top:5.03px;font-size:12.6px;line-height:12.6px;color:#000;letter-spacing:0px;">Atlas Special Collections</div></div>
<div class="a" style="left:229px;top:266px;width:26px;height:19px;overflow:hidden;">
<div class="t" style="left:3.5px;top:5.03px;font-size:12.6px;line-height:12.6px;color:#000;letter-spacing:0px;">|</div></div>
<div class="t" style="left:-13.50px;width:300px;text-align:right;top:271.03px;font-size:12.6px;line-height:12.6px;color:#000;font-weight:400;">23</div>
<div class="t" style="left:81.50px;width:300px;text-align:right;top:271.03px;font-size:12.6px;line-height:12.6px;color:#000;font-weight:400;">0</div>
<div class="t" style="left:231.50px;width:300px;text-align:right;top:271.03px;font-size:12.6px;line-height:12.6px;color:#000;font-weight:400;">1</div>
<div class="t" style="left:298.50px;width:300px;text-align:right;top:271.03px;font-size:12.6px;line-height:12.6px;color:#000;font-weight:400;">2</div>
<div class="t" style="left:409.50px;width:300px;text-align:right;top:271.03px;font-size:12.6px;line-height:12.6px;color:#000;font-weight:400;">9</div>
<div class="a" style="left:791px;top:266px;width:209px;height:19px;overflow:hidden;">
<div class="t" style="left:2px;top:5.03px;font-size:12.6px;line-height:12.6px;color:#000;letter-spacing:0.44px;">root@/repositories/2/resources/9</div></div>
<div class="t" style="left:768.50px;width:300px;text-align:right;top:271.03px;font-size:12.6px;line-height:12.6px;color:#000;font-weight:400;">11000</div>
<div class="t" style="left:833.50px;width:300px;text-align:right;top:271.03px;font-size:12.6px;line-height:12.6px;color:#000;font-weight:400;">1</div>
<div class="a" style="left:1136px;top:266px;width:55px;height:19px;overflow:hidden;">
<div class="t" style="left:2px;top:5.03px;font-size:12.6px;line-height:12.6px;color:#000;letter-spacing:0px;">532</div></div>
<div class="a" style="left:1192px;top:266px;width:107px;height:19px;overflow:hidden;">
<div class="t" style="left:2px;top:5.03px;font-size:12.6px;line-height:12.6px;color:#000;letter-spacing:0px;">Item 12</div></div>
<div class="t" style="left:1302.00px;top:271.03px;font-size:12.6px;line-height:12.6px;color:#000;font-weight:400;">Outgoing letters</div>
<div class="a" style="left:0px;top:285px;width:1527px;height:19px;background:#b4c0ab;"></div>
<div class="a" style="left:0px;top:285px;width:84px;height:19px;overflow:hidden;">
<div class="t" style="left:3px;top:5.03px;font-size:12.6px;line-height:12.6px;color:#000;letter-spacing:0px;">Atlas</div></div>
<div class="a" style="left:85px;top:285px;width:143px;height:19px;overflow:hidden;">
<div class="t" style="left:2px;top:5.03px;font-size:12.6px;line-height:12.6px;color:#000;letter-spacing:0px;">Atlas Special Collections</div></div>
<div class="a" style="left:229px;top:285px;width:26px;height:19px;overflow:hidden;">
<div class="t" style="left:3.5px;top:5.03px;font-size:12.6px;line-height:12.6px;color:#000;letter-spacing:0px;">|</div></div>
<div class="t" style="left:-13.50px;width:300px;text-align:right;top:290.03px;font-size:12.6px;line-height:12.6px;color:#000;font-weight:400;">24</div>
<div class="t" style="left:81.50px;width:300px;text-align:right;top:290.03px;font-size:12.6px;line-height:12.6px;color:#000;font-weight:400;">0</div>
<div class="t" style="left:231.50px;width:300px;text-align:right;top:290.03px;font-size:12.6px;line-height:12.6px;color:#000;font-weight:400;">1</div>
<div class="t" style="left:298.50px;width:300px;text-align:right;top:290.03px;font-size:12.6px;line-height:12.6px;color:#000;font-weight:400;">2</div>
<div class="t" style="left:409.50px;width:300px;text-align:right;top:290.03px;font-size:12.6px;line-height:12.6px;color:#000;font-weight:400;">9</div>
<div class="a" style="left:791px;top:285px;width:209px;height:19px;overflow:hidden;">
<div class="t" style="left:2px;top:5.03px;font-size:12.6px;line-height:12.6px;color:#000;letter-spacing:0.44px;">root@/repositories/2/resources/9</div></div>
<div class="t" style="left:768.50px;width:300px;text-align:right;top:290.03px;font-size:12.6px;line-height:12.6px;color:#000;font-weight:400;">12000</div>
<div class="t" style="left:833.50px;width:300px;text-align:right;top:290.03px;font-size:12.6px;line-height:12.6px;color:#000;font-weight:400;">1</div>
<div class="a" style="left:1136px;top:285px;width:55px;height:19px;overflow:hidden;">
<div class="t" style="left:2px;top:5.03px;font-size:12.6px;line-height:12.6px;color:#000;letter-spacing:0px;">533</div></div>
<div class="a" style="left:1192px;top:285px;width:107px;height:19px;overflow:hidden;">
<div class="t" style="left:2px;top:5.03px;font-size:12.6px;line-height:12.6px;color:#000;letter-spacing:0px;">Item 13</div></div>
<div class="t" style="left:1302.00px;top:290.03px;font-size:12.6px;line-height:12.6px;color:#000;font-weight:400;">Outgoing letters</div>
<div class="a" style="left:0px;top:304px;width:1527px;height:19px;background:#cacaca;"></div>
<div class="a" style="left:84px;top:304px;width:1px;height:19px;background:#b3b3b3;"></div>
<div class="a" style="left:228px;top:304px;width:1px;height:19px;background:#b3b3b3;"></div>
<div class="a" style="left:255px;top:304px;width:1px;height:19px;background:#b3b3b3;"></div>
<div class="a" style="left:288px;top:304px;width:1px;height:19px;background:#b3b3b3;"></div>
<div class="a" style="left:383px;top:304px;width:1px;height:19px;background:#b3b3b3;"></div>
<div class="a" style="left:533px;top:304px;width:1px;height:19px;background:#b3b3b3;"></div>
<div class="a" style="left:600px;top:304px;width:1px;height:19px;background:#b3b3b3;"></div>
<div class="a" style="left:711px;top:304px;width:1px;height:19px;background:#b3b3b3;"></div>
<div class="a" style="left:790px;top:304px;width:1px;height:19px;background:#b3b3b3;"></div>
<div class="a" style="left:1000px;top:304px;width:1px;height:19px;background:#b3b3b3;"></div>
<div class="a" style="left:1070px;top:304px;width:1px;height:19px;background:#b3b3b3;"></div>
<div class="a" style="left:1135px;top:304px;width:1px;height:19px;background:#b3b3b3;"></div>
<div class="a" style="left:1191px;top:304px;width:1px;height:19px;background:#b3b3b3;"></div>
<div class="a" style="left:1299px;top:304px;width:1px;height:19px;background:#b3b3b3;"></div>
<div class="a" style="left:0px;top:304px;width:84px;height:19px;overflow:hidden;">
<div class="t" style="left:3px;top:5.03px;font-size:12.6px;line-height:12.6px;color:#000;letter-spacing:0px;">Atlas</div></div>
<div class="a" style="left:85px;top:304px;width:143px;height:19px;overflow:hidden;">
<div class="t" style="left:2px;top:5.03px;font-size:12.6px;line-height:12.6px;color:#000;letter-spacing:0px;">Atlas Special Collections</div></div>
<div class="a" style="left:229px;top:304px;width:26px;height:19px;overflow:hidden;">
<div class="t" style="left:3.5px;top:5.03px;font-size:12.6px;line-height:12.6px;color:#000;letter-spacing:0px;">|</div></div>
<div class="t" style="left:-13.50px;width:300px;text-align:right;top:309.03px;font-size:12.6px;line-height:12.6px;color:#000;font-weight:400;">25</div>
<div class="t" style="left:81.50px;width:300px;text-align:right;top:309.03px;font-size:12.6px;line-height:12.6px;color:#000;font-weight:400;">0</div>
<div class="t" style="left:231.50px;width:300px;text-align:right;top:309.03px;font-size:12.6px;line-height:12.6px;color:#000;font-weight:400;">1</div>
<div class="t" style="left:298.50px;width:300px;text-align:right;top:309.03px;font-size:12.6px;line-height:12.6px;color:#000;font-weight:400;">2</div>
<div class="t" style="left:409.50px;width:300px;text-align:right;top:309.03px;font-size:12.6px;line-height:12.6px;color:#000;font-weight:400;">9</div>
<div class="a" style="left:791px;top:304px;width:209px;height:19px;overflow:hidden;">
<div class="t" style="left:2px;top:5.03px;font-size:12.6px;line-height:12.6px;color:#000;letter-spacing:0.44px;">root@/repositories/2/resources/9</div></div>
<div class="t" style="left:768.50px;width:300px;text-align:right;top:309.03px;font-size:12.6px;line-height:12.6px;color:#000;font-weight:400;">13000</div>
<div class="t" style="left:833.50px;width:300px;text-align:right;top:309.03px;font-size:12.6px;line-height:12.6px;color:#000;font-weight:400;">1</div>
<div class="a" style="left:1136px;top:304px;width:55px;height:19px;overflow:hidden;">
<div class="t" style="left:2px;top:5.03px;font-size:12.6px;line-height:12.6px;color:#000;letter-spacing:0px;">534</div></div>
<div class="a" style="left:1192px;top:304px;width:107px;height:19px;overflow:hidden;">
<div class="t" style="left:2px;top:5.03px;font-size:12.6px;line-height:12.6px;color:#000;letter-spacing:0px;">Item 14</div></div>
<div class="t" style="left:1302.00px;top:309.03px;font-size:12.6px;line-height:12.6px;color:#000;font-weight:400;">Outgoing letters</div>
<div class="a" style="left:0px;top:323px;width:1527px;height:19px;background:#b4c0ab;"></div>
<div class="a" style="left:0px;top:323px;width:84px;height:19px;overflow:hidden;">
<div class="t" style="left:3px;top:5.03px;font-size:12.6px;line-height:12.6px;color:#000;letter-spacing:0px;">Atlas</div></div>
<div class="a" style="left:85px;top:323px;width:143px;height:19px;overflow:hidden;">
<div class="t" style="left:2px;top:5.03px;font-size:12.6px;line-height:12.6px;color:#000;letter-spacing:0px;">Atlas Special Collections</div></div>
<div class="a" style="left:229px;top:323px;width:26px;height:19px;overflow:hidden;">
<div class="t" style="left:3.5px;top:5.03px;font-size:12.6px;line-height:12.6px;color:#000;letter-spacing:0px;">|</div></div>
<div class="t" style="left:-13.50px;width:300px;text-align:right;top:328.03px;font-size:12.6px;line-height:12.6px;color:#000;font-weight:400;">27</div>
<div class="t" style="left:81.50px;width:300px;text-align:right;top:328.03px;font-size:12.6px;line-height:12.6px;color:#000;font-weight:400;">0</div>
<div class="t" style="left:231.50px;width:300px;text-align:right;top:328.03px;font-size:12.6px;line-height:12.6px;color:#000;font-weight:400;">1</div>
<div class="t" style="left:298.50px;width:300px;text-align:right;top:328.03px;font-size:12.6px;line-height:12.6px;color:#000;font-weight:400;">2</div>
<div class="t" style="left:409.50px;width:300px;text-align:right;top:328.03px;font-size:12.6px;line-height:12.6px;color:#000;font-weight:400;">11</div>
<div class="a" style="left:791px;top:323px;width:209px;height:19px;overflow:hidden;">
<div class="t" style="left:2px;top:5.03px;font-size:12.6px;line-height:12.6px;color:#000;letter-spacing:0.44px;">root@/repositories/2/resources/11</div></div>
<div class="t" style="left:768.50px;width:300px;text-align:right;top:328.03px;font-size:12.6px;line-height:12.6px;color:#000;font-weight:400;">0</div>
<div class="t" style="left:833.50px;width:300px;text-align:right;top:328.03px;font-size:12.6px;line-height:12.6px;color:#000;font-weight:400;">1</div>
<div class="a" style="left:1136px;top:323px;width:55px;height:19px;overflow:hidden;">
<div class="t" style="left:2px;top:5.03px;font-size:12.6px;line-height:12.6px;color:#000;letter-spacing:0px;">940</div></div>
<div class="a" style="left:1192px;top:323px;width:107px;height:19px;overflow:hidden;">
<div class="t" style="left:2px;top:5.03px;font-size:12.6px;line-height:12.6px;color:#000;letter-spacing:0px;">Item 1</div></div>
<div class="t" style="left:1302.00px;top:328.03px;font-size:12.6px;line-height:12.6px;color:#000;font-weight:400;">George</div>
<div class="a" style="left:0px;top:342px;width:1527px;height:19px;background:#cacaca;"></div>
<div class="a" style="left:84px;top:342px;width:1px;height:19px;background:#b3b3b3;"></div>
<div class="a" style="left:228px;top:342px;width:1px;height:19px;background:#b3b3b3;"></div>
<div class="a" style="left:255px;top:342px;width:1px;height:19px;background:#b3b3b3;"></div>
<div class="a" style="left:288px;top:342px;width:1px;height:19px;background:#b3b3b3;"></div>
<div class="a" style="left:383px;top:342px;width:1px;height:19px;background:#b3b3b3;"></div>
<div class="a" style="left:533px;top:342px;width:1px;height:19px;background:#b3b3b3;"></div>
<div class="a" style="left:600px;top:342px;width:1px;height:19px;background:#b3b3b3;"></div>
<div class="a" style="left:711px;top:342px;width:1px;height:19px;background:#b3b3b3;"></div>
<div class="a" style="left:790px;top:342px;width:1px;height:19px;background:#b3b3b3;"></div>
<div class="a" style="left:1000px;top:342px;width:1px;height:19px;background:#b3b3b3;"></div>
<div class="a" style="left:1070px;top:342px;width:1px;height:19px;background:#b3b3b3;"></div>
<div class="a" style="left:1135px;top:342px;width:1px;height:19px;background:#b3b3b3;"></div>
<div class="a" style="left:1191px;top:342px;width:1px;height:19px;background:#b3b3b3;"></div>
<div class="a" style="left:1299px;top:342px;width:1px;height:19px;background:#b3b3b3;"></div>
<div class="a" style="left:0px;top:342px;width:84px;height:19px;overflow:hidden;">
<div class="t" style="left:3px;top:5.03px;font-size:12.6px;line-height:12.6px;color:#000;letter-spacing:0px;">Atlas</div></div>
<div class="a" style="left:85px;top:342px;width:143px;height:19px;overflow:hidden;">
<div class="t" style="left:2px;top:5.03px;font-size:12.6px;line-height:12.6px;color:#000;letter-spacing:0px;">Atlas Special Collections</div></div>
<div class="a" style="left:229px;top:342px;width:26px;height:19px;overflow:hidden;">
<div class="t" style="left:3.5px;top:5.03px;font-size:12.6px;line-height:12.6px;color:#000;letter-spacing:0px;">|</div></div>
<div class="t" style="left:-13.50px;width:300px;text-align:right;top:347.03px;font-size:12.6px;line-height:12.6px;color:#000;font-weight:400;">28</div>
<div class="t" style="left:81.50px;width:300px;text-align:right;top:347.03px;font-size:12.6px;line-height:12.6px;color:#000;font-weight:400;">0</div>
<div class="t" style="left:231.50px;width:300px;text-align:right;top:347.03px;font-size:12.6px;line-height:12.6px;color:#000;font-weight:400;">1</div>
<div class="t" style="left:298.50px;width:300px;text-align:right;top:347.03px;font-size:12.6px;line-height:12.6px;color:#000;font-weight:400;">2</div>
<div class="t" style="left:409.50px;width:300px;text-align:right;top:347.03px;font-size:12.6px;line-height:12.6px;color:#000;font-weight:400;">11</div>
<div class="a" style="left:791px;top:342px;width:209px;height:19px;overflow:hidden;">
<div class="t" style="left:2px;top:5.03px;font-size:12.6px;line-height:12.6px;color:#000;letter-spacing:0.44px;">root@/repositories/2/resources/11</div></div>
<div class="t" style="left:768.50px;width:300px;text-align:right;top:347.03px;font-size:12.6px;line-height:12.6px;color:#000;font-weight:400;">1000</div>
<div class="t" style="left:833.50px;width:300px;text-align:right;top:347.03px;font-size:12.6px;line-height:12.6px;color:#000;font-weight:400;">1</div>
<div class="a" style="left:1136px;top:342px;width:55px;height:19px;overflow:hidden;">
<div class="t" style="left:2px;top:5.03px;font-size:12.6px;line-height:12.6px;color:#000;letter-spacing:0px;">941</div></div>
<div class="a" style="left:1192px;top:342px;width:107px;height:19px;overflow:hidden;">
<div class="t" style="left:2px;top:5.03px;font-size:12.6px;line-height:12.6px;color:#000;letter-spacing:0px;">Item 2</div></div>
<div class="t" style="left:1302.00px;top:347.03px;font-size:12.6px;line-height:12.6px;color:#000;font-weight:400;">Sibyl</div>
<div class="a" style="left:0px;top:361px;width:1527px;height:19px;background:#b4c0ab;"></div>
<div class="a" style="left:0px;top:361px;width:84px;height:19px;overflow:hidden;">
<div class="t" style="left:3px;top:5.03px;font-size:12.6px;line-height:12.6px;color:#000;letter-spacing:0px;">Atlas</div></div>
<div class="a" style="left:85px;top:361px;width:143px;height:19px;overflow:hidden;">
<div class="t" style="left:2px;top:5.03px;font-size:12.6px;line-height:12.6px;color:#000;letter-spacing:0px;">Atlas Special Collections</div></div>
<div class="a" style="left:229px;top:361px;width:26px;height:19px;overflow:hidden;">
<div class="t" style="left:3.5px;top:5.03px;font-size:12.6px;line-height:12.6px;color:#000;letter-spacing:0px;">|</div></div>
<div class="t" style="left:-13.50px;width:300px;text-align:right;top:366.03px;font-size:12.6px;line-height:12.6px;color:#000;font-weight:400;">29</div>
<div class="t" style="left:81.50px;width:300px;text-align:right;top:366.03px;font-size:12.6px;line-height:12.6px;color:#000;font-weight:400;">0</div>
<div class="t" style="left:231.50px;width:300px;text-align:right;top:366.03px;font-size:12.6px;line-height:12.6px;color:#000;font-weight:400;">1</div>
<div class="t" style="left:298.50px;width:300px;text-align:right;top:366.03px;font-size:12.6px;line-height:12.6px;color:#000;font-weight:400;">2</div>
<div class="t" style="left:409.50px;width:300px;text-align:right;top:366.03px;font-size:12.6px;line-height:12.6px;color:#000;font-weight:400;">11</div>
<div class="a" style="left:791px;top:361px;width:209px;height:19px;overflow:hidden;">
<div class="t" style="left:2px;top:5.03px;font-size:12.6px;line-height:12.6px;color:#000;letter-spacing:0.44px;">root@/repositories/2/resources/11</div></div>
<div class="t" style="left:768.50px;width:300px;text-align:right;top:366.03px;font-size:12.6px;line-height:12.6px;color:#000;font-weight:400;">2000</div>
<div class="t" style="left:833.50px;width:300px;text-align:right;top:366.03px;font-size:12.6px;line-height:12.6px;color:#000;font-weight:400;">1</div>
<div class="a" style="left:1136px;top:361px;width:55px;height:19px;overflow:hidden;">
<div class="t" style="left:2px;top:5.03px;font-size:12.6px;line-height:12.6px;color:#000;letter-spacing:0px;">942</div></div>
<div class="a" style="left:1192px;top:361px;width:107px;height:19px;overflow:hidden;">
<div class="t" style="left:2px;top:5.03px;font-size:12.6px;line-height:12.6px;color:#000;letter-spacing:0px;">Item 3</div></div>
<div class="t" style="left:1302.00px;top:366.03px;font-size:12.6px;line-height:12.6px;color:#000;font-weight:400;">Sibyl</div>
<div class="a" style="left:0px;top:380px;width:1527px;height:19px;background:#cacaca;"></div>
<div class="a" style="left:84px;top:380px;width:1px;height:19px;background:#b3b3b3;"></div>
<div class="a" style="left:228px;top:380px;width:1px;height:19px;background:#b3b3b3;"></div>
<div class="a" style="left:255px;top:380px;width:1px;height:19px;background:#b3b3b3;"></div>
<div class="a" style="left:288px;top:380px;width:1px;height:19px;background:#b3b3b3;"></div>
<div class="a" style="left:383px;top:380px;width:1px;height:19px;background:#b3b3b3;"></div>
<div class="a" style="left:533px;top:380px;width:1px;height:19px;background:#b3b3b3;"></div>
<div class="a" style="left:600px;top:380px;width:1px;height:19px;background:#b3b3b3;"></div>
<div class="a" style="left:711px;top:380px;width:1px;height:19px;background:#b3b3b3;"></div>
<div class="a" style="left:790px;top:380px;width:1px;height:19px;background:#b3b3b3;"></div>
<div class="a" style="left:1000px;top:380px;width:1px;height:19px;background:#b3b3b3;"></div>
<div class="a" style="left:1070px;top:380px;width:1px;height:19px;background:#b3b3b3;"></div>
<div class="a" style="left:1135px;top:380px;width:1px;height:19px;background:#b3b3b3;"></div>
<div class="a" style="left:1191px;top:380px;width:1px;height:19px;background:#b3b3b3;"></div>
<div class="a" style="left:1299px;top:380px;width:1px;height:19px;background:#b3b3b3;"></div>
<div class="a" style="left:0px;top:380px;width:84px;height:19px;overflow:hidden;">
<div class="t" style="left:3px;top:5.03px;font-size:12.6px;line-height:12.6px;color:#000;letter-spacing:0px;">Atlas</div></div>
<div class="a" style="left:85px;top:380px;width:143px;height:19px;overflow:hidden;">
<div class="t" style="left:2px;top:5.03px;font-size:12.6px;line-height:12.6px;color:#000;letter-spacing:0px;">Atlas Special Collections</div></div>
<div class="a" style="left:229px;top:380px;width:26px;height:19px;overflow:hidden;">
<div class="t" style="left:3.5px;top:5.03px;font-size:12.6px;line-height:12.6px;color:#000;letter-spacing:0px;">|</div></div>
<div class="t" style="left:-13.50px;width:300px;text-align:right;top:385.03px;font-size:12.6px;line-height:12.6px;color:#000;font-weight:400;">30</div>
<div class="t" style="left:81.50px;width:300px;text-align:right;top:385.03px;font-size:12.6px;line-height:12.6px;color:#000;font-weight:400;">0</div>
<div class="t" style="left:231.50px;width:300px;text-align:right;top:385.03px;font-size:12.6px;line-height:12.6px;color:#000;font-weight:400;">1</div>
<div class="t" style="left:298.50px;width:300px;text-align:right;top:385.03px;font-size:12.6px;line-height:12.6px;color:#000;font-weight:400;">2</div>
<div class="t" style="left:409.50px;width:300px;text-align:right;top:385.03px;font-size:12.6px;line-height:12.6px;color:#000;font-weight:400;">11</div>
<div class="a" style="left:791px;top:380px;width:209px;height:19px;overflow:hidden;">
<div class="t" style="left:2px;top:5.03px;font-size:12.6px;line-height:12.6px;color:#000;letter-spacing:0.44px;">root@/repositories/2/resources/11</div></div>
<div class="t" style="left:768.50px;width:300px;text-align:right;top:385.03px;font-size:12.6px;line-height:12.6px;color:#000;font-weight:400;">3000</div>
<div class="t" style="left:833.50px;width:300px;text-align:right;top:385.03px;font-size:12.6px;line-height:12.6px;color:#000;font-weight:400;">1</div>
<div class="a" style="left:1136px;top:380px;width:55px;height:19px;overflow:hidden;">
<div class="t" style="left:2px;top:5.03px;font-size:12.6px;line-height:12.6px;color:#000;letter-spacing:0px;">943</div></div>
<div class="a" style="left:1192px;top:380px;width:107px;height:19px;overflow:hidden;">
<div class="t" style="left:2px;top:5.03px;font-size:12.6px;line-height:12.6px;color:#000;letter-spacing:0px;">Item 4</div></div>
<div class="t" style="left:1302.00px;top:385.03px;font-size:12.6px;line-height:12.6px;color:#000;font-weight:400;">Sibyl</div>
<div class="a" style="left:0px;top:399px;width:1527px;height:19px;background:#b4c0ab;"></div>
<div class="a" style="left:0px;top:399px;width:84px;height:19px;overflow:hidden;">
<div class="t" style="left:3px;top:5.03px;font-size:12.6px;line-height:12.6px;color:#000;letter-spacing:0px;">Atlas</div></div>
<div class="a" style="left:85px;top:399px;width:143px;height:19px;overflow:hidden;">
<div class="t" style="left:2px;top:5.03px;font-size:12.6px;line-height:12.6px;color:#000;letter-spacing:0px;">Atlas Special Collections</div></div>
<div class="a" style="left:229px;top:399px;width:26px;height:19px;overflow:hidden;">
<div class="t" style="left:3.5px;top:5.03px;font-size:12.6px;line-height:12.6px;color:#000;letter-spacing:0px;">|</div></div>
<div class="t" style="left:-13.50px;width:300px;text-align:right;top:404.03px;font-size:12.6px;line-height:12.6px;color:#000;font-weight:400;">31</div>
<div class="t" style="left:81.50px;width:300px;text-align:right;top:404.03px;font-size:12.6px;line-height:12.6px;color:#000;font-weight:400;">0</div>
<div class="t" style="left:231.50px;width:300px;text-align:right;top:404.03px;font-size:12.6px;line-height:12.6px;color:#000;font-weight:400;">1</div>
<div class="t" style="left:298.50px;width:300px;text-align:right;top:404.03px;font-size:12.6px;line-height:12.6px;color:#000;font-weight:400;">2</div>
<div class="t" style="left:409.50px;width:300px;text-align:right;top:404.03px;font-size:12.6px;line-height:12.6px;color:#000;font-weight:400;">11</div>
<div class="a" style="left:791px;top:399px;width:209px;height:19px;overflow:hidden;">
<div class="t" style="left:2px;top:5.03px;font-size:12.6px;line-height:12.6px;color:#000;letter-spacing:0.44px;">root@/repositories/2/resources/11</div></div>
<div class="t" style="left:768.50px;width:300px;text-align:right;top:404.03px;font-size:12.6px;line-height:12.6px;color:#000;font-weight:400;">4000</div>
<div class="t" style="left:833.50px;width:300px;text-align:right;top:404.03px;font-size:12.6px;line-height:12.6px;color:#000;font-weight:400;">1</div>
<div class="a" style="left:1136px;top:399px;width:55px;height:19px;overflow:hidden;">
<div class="t" style="left:2px;top:5.03px;font-size:12.6px;line-height:12.6px;color:#000;letter-spacing:0px;">944</div></div>
<div class="a" style="left:1192px;top:399px;width:107px;height:19px;overflow:hidden;">
<div class="t" style="left:2px;top:5.03px;font-size:12.6px;line-height:12.6px;color:#000;letter-spacing:0px;">Item 5</div></div>
<div class="t" style="left:1302.00px;top:404.03px;font-size:12.6px;line-height:12.6px;color:#000;font-weight:400;">Sibyl</div>
<div class="a" style="left:0px;top:418px;width:1527px;height:19px;background:#cacaca;"></div>
<div class="a" style="left:84px;top:418px;width:1px;height:19px;background:#b3b3b3;"></div>
<div class="a" style="left:228px;top:418px;width:1px;height:19px;background:#b3b3b3;"></div>
<div class="a" style="left:255px;top:418px;width:1px;height:19px;background:#b3b3b3;"></div>
<div class="a" style="left:288px;top:418px;width:1px;height:19px;background:#b3b3b3;"></div>
<div class="a" style="left:383px;top:418px;width:1px;height:19px;background:#b3b3b3;"></div>
<div class="a" style="left:533px;top:418px;width:1px;height:19px;background:#b3b3b3;"></div>
<div class="a" style="left:600px;top:418px;width:1px;height:19px;background:#b3b3b3;"></div>
<div class="a" style="left:711px;top:418px;width:1px;height:19px;background:#b3b3b3;"></div>
<div class="a" style="left:790px;top:418px;width:1px;height:19px;background:#b3b3b3;"></div>
<div class="a" style="left:1000px;top:418px;width:1px;height:19px;background:#b3b3b3;"></div>
<div class="a" style="left:1070px;top:418px;width:1px;height:19px;background:#b3b3b3;"></div>
<div class="a" style="left:1135px;top:418px;width:1px;height:19px;background:#b3b3b3;"></div>
<div class="a" style="left:1191px;top:418px;width:1px;height:19px;background:#b3b3b3;"></div>
<div class="a" style="left:1299px;top:418px;width:1px;height:19px;background:#b3b3b3;"></div>
<div class="a" style="left:0px;top:418px;width:84px;height:19px;overflow:hidden;">
<div class="t" style="left:3px;top:5.03px;font-size:12.6px;line-height:12.6px;color:#000;letter-spacing:0px;">Atlas</div></div>
<div class="a" style="left:85px;top:418px;width:143px;height:19px;overflow:hidden;">
<div class="t" style="left:2px;top:5.03px;font-size:12.6px;line-height:12.6px;color:#000;letter-spacing:0px;">Atlas Special Collections</div></div>
<div class="a" style="left:229px;top:418px;width:26px;height:19px;overflow:hidden;">
<div class="t" style="left:3.5px;top:5.03px;font-size:12.6px;line-height:12.6px;color:#000;letter-spacing:0px;">|</div></div>
<div class="t" style="left:-13.50px;width:300px;text-align:right;top:423.03px;font-size:12.6px;line-height:12.6px;color:#000;font-weight:400;">32</div>
<div class="t" style="left:81.50px;width:300px;text-align:right;top:423.03px;font-size:12.6px;line-height:12.6px;color:#000;font-weight:400;">0</div>
<div class="t" style="left:231.50px;width:300px;text-align:right;top:423.03px;font-size:12.6px;line-height:12.6px;color:#000;font-weight:400;">1</div>
<div class="t" style="left:298.50px;width:300px;text-align:right;top:423.03px;font-size:12.6px;line-height:12.6px;color:#000;font-weight:400;">2</div>
<div class="t" style="left:409.50px;width:300px;text-align:right;top:423.03px;font-size:12.6px;line-height:12.6px;color:#000;font-weight:400;">11</div>
<div class="a" style="left:791px;top:418px;width:209px;height:19px;overflow:hidden;">
<div class="t" style="left:2px;top:5.03px;font-size:12.6px;line-height:12.6px;color:#000;letter-spacing:0.44px;">root@/repositories/2/resources/11</div></div>
<div class="t" style="left:768.50px;width:300px;text-align:right;top:423.03px;font-size:12.6px;line-height:12.6px;color:#000;font-weight:400;">5000</div>
<div class="t" style="left:833.50px;width:300px;text-align:right;top:423.03px;font-size:12.6px;line-height:12.6px;color:#000;font-weight:400;">1</div>
<div class="a" style="left:1136px;top:418px;width:55px;height:19px;overflow:hidden;">
<div class="t" style="left:2px;top:5.03px;font-size:12.6px;line-height:12.6px;color:#000;letter-spacing:0px;">945</div></div>
<div class="a" style="left:1192px;top:418px;width:107px;height:19px;overflow:hidden;">
<div class="t" style="left:2px;top:5.03px;font-size:12.6px;line-height:12.6px;color:#000;letter-spacing:0px;">Item 6</div></div>
<div class="t" style="left:1302.00px;top:423.03px;font-size:12.6px;line-height:12.6px;color:#000;font-weight:400;">William</div>
<div class="a" style="left:0px;top:437px;width:1527px;height:19px;background:#b4c0ab;"></div>
<div class="a" style="left:0px;top:437px;width:84px;height:19px;overflow:hidden;">
<div class="t" style="left:3px;top:5.03px;font-size:12.6px;line-height:12.6px;color:#000;letter-spacing:0px;">Atlas</div></div>
<div class="a" style="left:85px;top:437px;width:143px;height:19px;overflow:hidden;">
<div class="t" style="left:2px;top:5.03px;font-size:12.6px;line-height:12.6px;color:#000;letter-spacing:0px;">Atlas Special Collections</div></div>
<div class="a" style="left:229px;top:437px;width:26px;height:19px;overflow:hidden;">
<div class="t" style="left:3.5px;top:5.03px;font-size:12.6px;line-height:12.6px;color:#000;letter-spacing:0px;">|</div></div>
<div class="t" style="left:-13.50px;width:300px;text-align:right;top:442.03px;font-size:12.6px;line-height:12.6px;color:#000;font-weight:400;">33</div>
<div class="t" style="left:81.50px;width:300px;text-align:right;top:442.03px;font-size:12.6px;line-height:12.6px;color:#000;font-weight:400;">0</div>
<div class="t" style="left:231.50px;width:300px;text-align:right;top:442.03px;font-size:12.6px;line-height:12.6px;color:#000;font-weight:400;">1</div>
<div class="t" style="left:298.50px;width:300px;text-align:right;top:442.03px;font-size:12.6px;line-height:12.6px;color:#000;font-weight:400;">2</div>
<div class="t" style="left:409.50px;width:300px;text-align:right;top:442.03px;font-size:12.6px;line-height:12.6px;color:#000;font-weight:400;">11</div>
<div class="a" style="left:791px;top:437px;width:209px;height:19px;overflow:hidden;">
<div class="t" style="left:2px;top:5.03px;font-size:12.6px;line-height:12.6px;color:#000;letter-spacing:0.44px;">root@/repositories/2/resources/11</div></div>
<div class="t" style="left:768.50px;width:300px;text-align:right;top:442.03px;font-size:12.6px;line-height:12.6px;color:#000;font-weight:400;">6000</div>
<div class="t" style="left:833.50px;width:300px;text-align:right;top:442.03px;font-size:12.6px;line-height:12.6px;color:#000;font-weight:400;">1</div>
<div class="a" style="left:1136px;top:437px;width:55px;height:19px;overflow:hidden;">
<div class="t" style="left:2px;top:5.03px;font-size:12.6px;line-height:12.6px;color:#000;letter-spacing:0px;">946</div></div>
<div class="a" style="left:1192px;top:437px;width:107px;height:19px;overflow:hidden;">
<div class="t" style="left:2px;top:5.03px;font-size:12.6px;line-height:12.6px;color:#000;letter-spacing:0px;">Item 7</div></div>
<div class="t" style="left:1302.00px;top:442.03px;font-size:12.6px;line-height:12.6px;color:#000;font-weight:400;">[William</div>
<div class="a" style="left:0px;top:456px;width:1527px;height:19px;background:#cacaca;"></div>
<div class="a" style="left:84px;top:456px;width:1px;height:19px;background:#b3b3b3;"></div>
<div class="a" style="left:228px;top:456px;width:1px;height:19px;background:#b3b3b3;"></div>
<div class="a" style="left:255px;top:456px;width:1px;height:19px;background:#b3b3b3;"></div>
<div class="a" style="left:288px;top:456px;width:1px;height:19px;background:#b3b3b3;"></div>
<div class="a" style="left:383px;top:456px;width:1px;height:19px;background:#b3b3b3;"></div>
<div class="a" style="left:533px;top:456px;width:1px;height:19px;background:#b3b3b3;"></div>
<div class="a" style="left:600px;top:456px;width:1px;height:19px;background:#b3b3b3;"></div>
<div class="a" style="left:711px;top:456px;width:1px;height:19px;background:#b3b3b3;"></div>
<div class="a" style="left:790px;top:456px;width:1px;height:19px;background:#b3b3b3;"></div>
<div class="a" style="left:1000px;top:456px;width:1px;height:19px;background:#b3b3b3;"></div>
<div class="a" style="left:1070px;top:456px;width:1px;height:19px;background:#b3b3b3;"></div>
<div class="a" style="left:1135px;top:456px;width:1px;height:19px;background:#b3b3b3;"></div>
<div class="a" style="left:1191px;top:456px;width:1px;height:19px;background:#b3b3b3;"></div>
<div class="a" style="left:1299px;top:456px;width:1px;height:19px;background:#b3b3b3;"></div>
<div class="a" style="left:0px;top:456px;width:84px;height:19px;overflow:hidden;">
<div class="t" style="left:3px;top:5.03px;font-size:12.6px;line-height:12.6px;color:#000;letter-spacing:0px;">Atlas</div></div>
<div class="a" style="left:85px;top:456px;width:143px;height:19px;overflow:hidden;">
<div class="t" style="left:2px;top:5.03px;font-size:12.6px;line-height:12.6px;color:#000;letter-spacing:0px;">Atlas Special Collections</div></div>
<div class="a" style="left:229px;top:456px;width:26px;height:19px;overflow:hidden;">
<div class="t" style="left:3.5px;top:5.03px;font-size:12.6px;line-height:12.6px;color:#000;letter-spacing:0px;">|</div></div>
<div class="t" style="left:-13.50px;width:300px;text-align:right;top:461.03px;font-size:12.6px;line-height:12.6px;color:#000;font-weight:400;">34</div>
<div class="t" style="left:81.50px;width:300px;text-align:right;top:461.03px;font-size:12.6px;line-height:12.6px;color:#000;font-weight:400;">0</div>
<div class="t" style="left:231.50px;width:300px;text-align:right;top:461.03px;font-size:12.6px;line-height:12.6px;color:#000;font-weight:400;">1</div>
<div class="t" style="left:298.50px;width:300px;text-align:right;top:461.03px;font-size:12.6px;line-height:12.6px;color:#000;font-weight:400;">2</div>
<div class="t" style="left:409.50px;width:300px;text-align:right;top:461.03px;font-size:12.6px;line-height:12.6px;color:#000;font-weight:400;">11</div>
<div class="a" style="left:791px;top:456px;width:209px;height:19px;overflow:hidden;">
<div class="t" style="left:2px;top:5.03px;font-size:12.6px;line-height:12.6px;color:#000;letter-spacing:0.44px;">root@/repositories/2/resources/11</div></div>
<div class="t" style="left:768.50px;width:300px;text-align:right;top:461.03px;font-size:12.6px;line-height:12.6px;color:#000;font-weight:400;">7000</div>
<div class="t" style="left:833.50px;width:300px;text-align:right;top:461.03px;font-size:12.6px;line-height:12.6px;color:#000;font-weight:400;">1</div>
<div class="a" style="left:1136px;top:456px;width:55px;height:19px;overflow:hidden;">
<div class="t" style="left:2px;top:5.03px;font-size:12.6px;line-height:12.6px;color:#000;letter-spacing:0px;">947</div></div>
<div class="a" style="left:1192px;top:456px;width:107px;height:19px;overflow:hidden;">
<div class="t" style="left:2px;top:5.03px;font-size:12.6px;line-height:12.6px;color:#000;letter-spacing:0px;">Item 8</div></div>
<div class="t" style="left:1302.00px;top:461.03px;font-size:12.6px;line-height:12.6px;color:#000;font-weight:400;">William</div>
<div class="a" style="left:0px;top:475px;width:1527px;height:19px;background:#b4c0ab;"></div>
<div class="a" style="left:0px;top:475px;width:84px;height:19px;overflow:hidden;">
<div class="t" style="left:3px;top:5.03px;font-size:12.6px;line-height:12.6px;color:#000;letter-spacing:0px;">Atlas</div></div>
<div class="a" style="left:85px;top:475px;width:143px;height:19px;overflow:hidden;">
<div class="t" style="left:2px;top:5.03px;font-size:12.6px;line-height:12.6px;color:#000;letter-spacing:0px;">Atlas Special Collections</div></div>
<div class="a" style="left:229px;top:475px;width:26px;height:19px;overflow:hidden;">
<div class="t" style="left:3.5px;top:5.03px;font-size:12.6px;line-height:12.6px;color:#000;letter-spacing:0px;">|</div></div>
<div class="t" style="left:-13.50px;width:300px;text-align:right;top:480.03px;font-size:12.6px;line-height:12.6px;color:#000;font-weight:400;">35</div>
<div class="t" style="left:81.50px;width:300px;text-align:right;top:480.03px;font-size:12.6px;line-height:12.6px;color:#000;font-weight:400;">0</div>
<div class="t" style="left:231.50px;width:300px;text-align:right;top:480.03px;font-size:12.6px;line-height:12.6px;color:#000;font-weight:400;">1</div>
<div class="t" style="left:298.50px;width:300px;text-align:right;top:480.03px;font-size:12.6px;line-height:12.6px;color:#000;font-weight:400;">2</div>
<div class="t" style="left:409.50px;width:300px;text-align:right;top:480.03px;font-size:12.6px;line-height:12.6px;color:#000;font-weight:400;">12</div>
<div class="a" style="left:791px;top:475px;width:209px;height:19px;overflow:hidden;">
<div class="t" style="left:2px;top:5.03px;font-size:12.6px;line-height:12.6px;color:#000;letter-spacing:0.44px;">root@/repositories/2/resources/12</div></div>
<div class="t" style="left:768.50px;width:300px;text-align:right;top:480.03px;font-size:12.6px;line-height:12.6px;color:#000;font-weight:400;">0</div>
<div class="t" style="left:833.50px;width:300px;text-align:right;top:480.03px;font-size:12.6px;line-height:12.6px;color:#000;font-weight:400;">1</div>
<div class="a" style="left:1136px;top:475px;width:55px;height:19px;overflow:hidden;">
<div class="t" style="left:2px;top:5.03px;font-size:12.6px;line-height:12.6px;color:#000;letter-spacing:0px;">159843</div></div>
<div class="a" style="left:1192px;top:475px;width:107px;height:19px;overflow:hidden;">
<div class="t" style="left:2px;top:5.03px;font-size:12.6px;line-height:12.6px;color:#000;letter-spacing:0px;">Series 1</div></div>
<div class="t" style="left:1302.00px;top:480.03px;font-size:12.6px;line-height:12.6px;color:#000;font-weight:400;">Correspondence</div>
<div class="a" style="left:0px;top:494px;width:1527px;height:19px;background:#cacaca;"></div>
<div class="a" style="left:84px;top:494px;width:1px;height:19px;background:#b3b3b3;"></div>
<div class="a" style="left:228px;top:494px;width:1px;height:19px;background:#b3b3b3;"></div>
<div class="a" style="left:255px;top:494px;width:1px;height:19px;background:#b3b3b3;"></div>
<div class="a" style="left:288px;top:494px;width:1px;height:19px;background:#b3b3b3;"></div>
<div class="a" style="left:383px;top:494px;width:1px;height:19px;background:#b3b3b3;"></div>
<div class="a" style="left:533px;top:494px;width:1px;height:19px;background:#b3b3b3;"></div>
<div class="a" style="left:600px;top:494px;width:1px;height:19px;background:#b3b3b3;"></div>
<div class="a" style="left:711px;top:494px;width:1px;height:19px;background:#b3b3b3;"></div>
<div class="a" style="left:790px;top:494px;width:1px;height:19px;background:#b3b3b3;"></div>
<div class="a" style="left:1000px;top:494px;width:1px;height:19px;background:#b3b3b3;"></div>
<div class="a" style="left:1070px;top:494px;width:1px;height:19px;background:#b3b3b3;"></div>
<div class="a" style="left:1135px;top:494px;width:1px;height:19px;background:#b3b3b3;"></div>
<div class="a" style="left:1191px;top:494px;width:1px;height:19px;background:#b3b3b3;"></div>
<div class="a" style="left:1299px;top:494px;width:1px;height:19px;background:#b3b3b3;"></div>
<div class="a" style="left:0px;top:494px;width:84px;height:19px;overflow:hidden;">
<div class="t" style="left:3px;top:5.03px;font-size:12.6px;line-height:12.6px;color:#000;letter-spacing:0px;">Atlas</div></div>
<div class="a" style="left:85px;top:494px;width:143px;height:19px;overflow:hidden;">
<div class="t" style="left:2px;top:5.03px;font-size:12.6px;line-height:12.6px;color:#000;letter-spacing:0px;">Atlas Special Collections</div></div>
<div class="a" style="left:229px;top:494px;width:26px;height:19px;overflow:hidden;">
<div class="t" style="left:3.5px;top:5.03px;font-size:12.6px;line-height:12.6px;color:#000;letter-spacing:0px;">|</div></div>
<div class="t" style="left:-13.50px;width:300px;text-align:right;top:499.03px;font-size:12.6px;line-height:12.6px;color:#000;font-weight:400;">36</div>
<div class="t" style="left:81.50px;width:300px;text-align:right;top:499.03px;font-size:12.6px;line-height:12.6px;color:#000;font-weight:400;">0</div>
<div class="t" style="left:231.50px;width:300px;text-align:right;top:499.03px;font-size:12.6px;line-height:12.6px;color:#000;font-weight:400;">1</div>
<div class="t" style="left:298.50px;width:300px;text-align:right;top:499.03px;font-size:12.6px;line-height:12.6px;color:#000;font-weight:400;">2</div>
<div class="t" style="left:409.50px;width:300px;text-align:right;top:499.03px;font-size:12.6px;line-height:12.6px;color:#000;font-weight:400;">12</div>
<div class="t" style="left:488.50px;width:300px;text-align:right;top:499.03px;font-size:12.6px;line-height:12.6px;color:#000;font-weight:400;">35</div>
<div class="a" style="left:791px;top:494px;width:209px;height:19px;overflow:hidden;">
<div class="t" style="left:2px;top:5.03px;font-size:12.6px;line-height:12.6px;color:#000;letter-spacing:0.2px;">35@archival_object</div></div>
<div class="t" style="left:768.50px;width:300px;text-align:right;top:499.03px;font-size:12.6px;line-height:12.6px;color:#000;font-weight:400;">0</div>
<div class="t" style="left:833.50px;width:300px;text-align:right;top:499.03px;font-size:12.6px;line-height:12.6px;color:#000;font-weight:400;">1</div>
<div class="a" style="left:1136px;top:494px;width:55px;height:19px;overflow:hidden;">
<div class="t" style="left:2px;top:5.03px;font-size:12.6px;line-height:12.6px;color:#000;letter-spacing:0px;">159844</div></div>
<div class="a" style="left:1192px;top:494px;width:107px;height:19px;overflow:hidden;">
<div class="t" style="left:2px;top:5.03px;font-size:12.6px;line-height:12.6px;color:#000;letter-spacing:0px;">Box 1</div></div>
<div class="t" style="left:1302.00px;top:499.03px;font-size:12.6px;line-height:12.6px;color:#000;font-weight:400;">Rescue</div>
<div class="a" style="left:0px;top:513px;width:1527px;height:19px;background:#b4c0ab;"></div>
<div class="a" style="left:0px;top:513px;width:84px;height:19px;overflow:hidden;">
<div class="t" style="left:3px;top:5.03px;font-size:12.6px;line-height:12.6px;color:#000;letter-spacing:0px;">Atlas</div></div>
<div class="a" style="left:85px;top:513px;width:143px;height:19px;overflow:hidden;">
<div class="t" style="left:2px;top:5.03px;font-size:12.6px;line-height:12.6px;color:#000;letter-spacing:0px;">Atlas Special Collections</div></div>
<div class="a" style="left:229px;top:513px;width:26px;height:19px;overflow:hidden;">
<div class="t" style="left:3.5px;top:5.03px;font-size:12.6px;line-height:12.6px;color:#000;letter-spacing:0px;">|</div></div>
<div class="t" style="left:-13.50px;width:300px;text-align:right;top:518.03px;font-size:12.6px;line-height:12.6px;color:#000;font-weight:400;">37</div>
<div class="t" style="left:81.50px;width:300px;text-align:right;top:518.03px;font-size:12.6px;line-height:12.6px;color:#000;font-weight:400;">0</div>
<div class="t" style="left:231.50px;width:300px;text-align:right;top:518.03px;font-size:12.6px;line-height:12.6px;color:#000;font-weight:400;">1</div>
<div class="t" style="left:298.50px;width:300px;text-align:right;top:518.03px;font-size:12.6px;line-height:12.6px;color:#000;font-weight:400;">2</div>
<div class="t" style="left:409.50px;width:300px;text-align:right;top:518.03px;font-size:12.6px;line-height:12.6px;color:#000;font-weight:400;">12</div>
<div class="t" style="left:488.50px;width:300px;text-align:right;top:518.03px;font-size:12.6px;line-height:12.6px;color:#000;font-weight:400;">36</div>
<div class="a" style="left:791px;top:513px;width:209px;height:19px;overflow:hidden;">
<div class="t" style="left:2px;top:5.03px;font-size:12.6px;line-height:12.6px;color:#000;letter-spacing:0.2px;">36@archival_object</div></div>
<div class="t" style="left:768.50px;width:300px;text-align:right;top:518.03px;font-size:12.6px;line-height:12.6px;color:#000;font-weight:400;">0</div>
<div class="t" style="left:833.50px;width:300px;text-align:right;top:518.03px;font-size:12.6px;line-height:12.6px;color:#000;font-weight:400;">1</div>
<div class="a" style="left:1136px;top:513px;width:55px;height:19px;overflow:hidden;">
<div class="t" style="left:2px;top:5.03px;font-size:12.6px;line-height:12.6px;color:#000;letter-spacing:0px;">159846</div></div>
<div class="a" style="left:1192px;top:513px;width:107px;height:19px;overflow:hidden;">
<div class="t" style="left:2px;top:5.03px;font-size:12.6px;line-height:12.6px;color:#000;letter-spacing:0px;">Folder  1</div></div>
<div class="t" style="left:1302.00px;top:518.03px;font-size:12.6px;line-height:12.6px;color:#000;font-weight:400;">Samuel</div>
<div class="a" style="left:0px;top:532px;width:1527px;height:19px;background:#cacaca;"></div>
<div class="a" style="left:84px;top:532px;width:1px;height:19px;background:#b3b3b3;"></div>
<div class="a" style="left:228px;top:532px;width:1px;height:19px;background:#b3b3b3;"></div>
<div class="a" style="left:255px;top:532px;width:1px;height:19px;background:#b3b3b3;"></div>
<div class="a" style="left:288px;top:532px;width:1px;height:19px;background:#b3b3b3;"></div>
<div class="a" style="left:383px;top:532px;width:1px;height:19px;background:#b3b3b3;"></div>
<div class="a" style="left:533px;top:532px;width:1px;height:19px;background:#b3b3b3;"></div>
<div class="a" style="left:600px;top:532px;width:1px;height:19px;background:#b3b3b3;"></div>
<div class="a" style="left:711px;top:532px;width:1px;height:19px;background:#b3b3b3;"></div>
<div class="a" style="left:790px;top:532px;width:1px;height:19px;background:#b3b3b3;"></div>
<div class="a" style="left:1000px;top:532px;width:1px;height:19px;background:#b3b3b3;"></div>
<div class="a" style="left:1070px;top:532px;width:1px;height:19px;background:#b3b3b3;"></div>
<div class="a" style="left:1135px;top:532px;width:1px;height:19px;background:#b3b3b3;"></div>
<div class="a" style="left:1191px;top:532px;width:1px;height:19px;background:#b3b3b3;"></div>
<div class="a" style="left:1299px;top:532px;width:1px;height:19px;background:#b3b3b3;"></div>
<div class="a" style="left:0px;top:532px;width:84px;height:19px;overflow:hidden;">
<div class="t" style="left:3px;top:5.03px;font-size:12.6px;line-height:12.6px;color:#000;letter-spacing:0px;">Atlas</div></div>
<div class="a" style="left:85px;top:532px;width:143px;height:19px;overflow:hidden;">
<div class="t" style="left:2px;top:5.03px;font-size:12.6px;line-height:12.6px;color:#000;letter-spacing:0px;">Atlas Special Collections</div></div>
<div class="a" style="left:229px;top:532px;width:26px;height:19px;overflow:hidden;">
<div class="t" style="left:3.5px;top:5.03px;font-size:12.6px;line-height:12.6px;color:#000;letter-spacing:0px;">|</div></div>
<div class="t" style="left:-13.50px;width:300px;text-align:right;top:537.03px;font-size:12.6px;line-height:12.6px;color:#000;font-weight:400;">38</div>
<div class="t" style="left:81.50px;width:300px;text-align:right;top:537.03px;font-size:12.6px;line-height:12.6px;color:#000;font-weight:400;">0</div>
<div class="t" style="left:231.50px;width:300px;text-align:right;top:537.03px;font-size:12.6px;line-height:12.6px;color:#000;font-weight:400;">1</div>
<div class="t" style="left:298.50px;width:300px;text-align:right;top:537.03px;font-size:12.6px;line-height:12.6px;color:#000;font-weight:400;">2</div>
<div class="t" style="left:409.50px;width:300px;text-align:right;top:537.03px;font-size:12.6px;line-height:12.6px;color:#000;font-weight:400;">12</div>
<div class="t" style="left:488.50px;width:300px;text-align:right;top:537.03px;font-size:12.6px;line-height:12.6px;color:#000;font-weight:400;">36</div>
<div class="a" style="left:791px;top:532px;width:209px;height:19px;overflow:hidden;">
<div class="t" style="left:2px;top:5.03px;font-size:12.6px;line-height:12.6px;color:#000;letter-spacing:0.2px;">36@archival_object</div></div>
<div class="t" style="left:768.50px;width:300px;text-align:right;top:537.03px;font-size:12.6px;line-height:12.6px;color:#000;font-weight:400;">1000</div>
<div class="t" style="left:833.50px;width:300px;text-align:right;top:537.03px;font-size:12.6px;line-height:12.6px;color:#000;font-weight:400;">1</div>
<div class="a" style="left:1136px;top:532px;width:55px;height:19px;overflow:hidden;">
<div class="t" style="left:2px;top:5.03px;font-size:12.6px;line-height:12.6px;color:#000;letter-spacing:0px;">159847</div></div>
<div class="a" style="left:1192px;top:532px;width:107px;height:19px;overflow:hidden;">
<div class="t" style="left:2px;top:5.03px;font-size:12.6px;line-height:12.6px;color:#000;letter-spacing:0px;">Folder  2</div></div>
<div class="t" style="left:1302.00px;top:537.03px;font-size:12.6px;line-height:12.6px;color:#000;font-weight:400;">Samuel</div>
<div class="a" style="left:0px;top:551px;width:1527px;height:19px;background:#b4c0ab;"></div>
<div class="a" style="left:0px;top:551px;width:84px;height:19px;overflow:hidden;">
<div class="t" style="left:3px;top:5.03px;font-size:12.6px;line-height:12.6px;color:#000;letter-spacing:0px;">Atlas</div></div>
<div class="a" style="left:85px;top:551px;width:143px;height:19px;overflow:hidden;">
<div class="t" style="left:2px;top:5.03px;font-size:12.6px;line-height:12.6px;color:#000;letter-spacing:0px;">Atlas Special Collections</div></div>
<div class="a" style="left:229px;top:551px;width:26px;height:19px;overflow:hidden;">
<div class="t" style="left:3.5px;top:5.03px;font-size:12.6px;line-height:12.6px;color:#000;letter-spacing:0px;">|</div></div>
<div class="t" style="left:-13.50px;width:300px;text-align:right;top:556.03px;font-size:12.6px;line-height:12.6px;color:#000;font-weight:400;">39</div>
<div class="t" style="left:81.50px;width:300px;text-align:right;top:556.03px;font-size:12.6px;line-height:12.6px;color:#000;font-weight:400;">0</div>
<div class="t" style="left:231.50px;width:300px;text-align:right;top:556.03px;font-size:12.6px;line-height:12.6px;color:#000;font-weight:400;">1</div>
<div class="t" style="left:298.50px;width:300px;text-align:right;top:556.03px;font-size:12.6px;line-height:12.6px;color:#000;font-weight:400;">2</div>
<div class="t" style="left:409.50px;width:300px;text-align:right;top:556.03px;font-size:12.6px;line-height:12.6px;color:#000;font-weight:400;">12</div>
<div class="t" style="left:488.50px;width:300px;text-align:right;top:556.03px;font-size:12.6px;line-height:12.6px;color:#000;font-weight:400;">36</div>
<div class="a" style="left:791px;top:551px;width:209px;height:19px;overflow:hidden;">
<div class="t" style="left:2px;top:5.03px;font-size:12.6px;line-height:12.6px;color:#000;letter-spacing:0.2px;">36@archival_object</div></div>
<div class="t" style="left:768.50px;width:300px;text-align:right;top:556.03px;font-size:12.6px;line-height:12.6px;color:#000;font-weight:400;">2000</div>
<div class="t" style="left:833.50px;width:300px;text-align:right;top:556.03px;font-size:12.6px;line-height:12.6px;color:#000;font-weight:400;">1</div>
<div class="a" style="left:1136px;top:551px;width:55px;height:19px;overflow:hidden;">
<div class="t" style="left:2px;top:5.03px;font-size:12.6px;line-height:12.6px;color:#000;letter-spacing:0px;">159848</div></div>
<div class="a" style="left:1192px;top:551px;width:107px;height:19px;overflow:hidden;">
<div class="t" style="left:2px;top:5.03px;font-size:12.6px;line-height:12.6px;color:#000;letter-spacing:0px;">Folder  3</div></div>
<div class="t" style="left:1302.00px;top:556.03px;font-size:12.6px;line-height:12.6px;color:#000;font-weight:400;">Samuel</div>
<div class="a" style="left:0px;top:19px;width:1527px;height:1px;background:#94b282;"></div>
<div class="a" style="left:0px;top:38px;width:1527px;height:1px;background:#94b282;"></div>
<div class="a" style="left:0px;top:57px;width:1527px;height:1px;background:#94b282;"></div>
<div class="a" style="left:0px;top:76px;width:1527px;height:1px;background:#94b282;"></div>
<div class="a" style="left:0px;top:95px;width:1527px;height:1px;background:#94b282;"></div>
<div class="a" style="left:0px;top:114px;width:1527px;height:1px;background:#94b282;"></div>
<div class="a" style="left:0px;top:133px;width:1527px;height:1px;background:#94b282;"></div>
<div class="a" style="left:0px;top:152px;width:1527px;height:1px;background:#94b282;"></div>
<div class="a" style="left:0px;top:171px;width:1527px;height:1px;background:#94b282;"></div>
<div class="a" style="left:0px;top:190px;width:1527px;height:1px;background:#94b282;"></div>
<div class="a" style="left:0px;top:209px;width:1527px;height:1px;background:#94b282;"></div>
<div class="a" style="left:0px;top:228px;width:1527px;height:1px;background:#94b282;"></div>
<div class="a" style="left:0px;top:247px;width:1527px;height:1px;background:#94b282;"></div>
<div class="a" style="left:0px;top:266px;width:1527px;height:1px;background:#94b282;"></div>
<div class="a" style="left:0px;top:285px;width:1527px;height:1px;background:#94b282;"></div>
<div class="a" style="left:0px;top:304px;width:1527px;height:1px;background:#94b282;"></div>
<div class="a" style="left:0px;top:323px;width:1527px;height:1px;background:#94b282;"></div>
<div class="a" style="left:0px;top:342px;width:1527px;height:1px;background:#94b282;"></div>
<div class="a" style="left:0px;top:361px;width:1527px;height:1px;background:#94b282;"></div>
<div class="a" style="left:0px;top:380px;width:1527px;height:1px;background:#94b282;"></div>
<div class="a" style="left:0px;top:399px;width:1527px;height:1px;background:#94b282;"></div>
<div class="a" style="left:0px;top:418px;width:1527px;height:1px;background:#94b282;"></div>
<div class="a" style="left:0px;top:437px;width:1527px;height:1px;background:#94b282;"></div>
<div class="a" style="left:0px;top:456px;width:1527px;height:1px;background:#94b282;"></div>
<div class="a" style="left:0px;top:475px;width:1527px;height:1px;background:#94b282;"></div>
<div class="a" style="left:0px;top:494px;width:1527px;height:1px;background:#94b282;"></div>
<div class="a" style="left:0px;top:513px;width:1527px;height:1px;background:#94b282;"></div>
<div class="a" style="left:0px;top:532px;width:1527px;height:1px;background:#94b282;"></div>
<div class="a" style="left:0px;top:551px;width:1527px;height:1px;background:#94b282;"></div>
<div class="a" style="left:0px;top:570px;width:1527px;height:1px;background:#94b282;"></div>
<div class="a" style="left:-1px;top:-1px;width:3px;height:622px;background:#217346;"></div>
<div class="a" style="left:-1px;top:-1px;width:1428px;height:2px;background:#217346;"></div>
<div class="a" style="left:1px;top:1px;width:1px;height:620px;background:#e4eedd;"></div>
<div class="a" style="left:1px;top:1px;width:1393px;height:1px;background:#e4eedd;"></div>
</div>
<div class="a" style="left:65px;top:243px;width:2px;height:572px;background:#217346;"></div>
<div class="a" style="left:65px;top:243px;width:1328px;height:2px;background:#217346;"></div>
<div class="a" style="left:41px;top:815px;width:1352px;height:1.5px;background:#b4b4b4;"></div>
<div class="a" style="left:1393px;top:226px;width:21px;height:590px;background:#e6e6e6;"></div>
<div class="a" style="left:1396.5px;top:226px;width:16px;height:590px;background:#dcdcdc;"></div>
<div class="a" style="left:1396.5px;top:226px;width:16px;height:344.5px;background:#fff;border:1px solid #d8d8d8;box-sizing:border-box;"></div>
<div class="a" style="left:1397px;top:242px;width:15px;height:1px;background:#d8d8d8;"></div>
<svg class="a" style="left:1400px;top:232px;" width="9" height="5" viewBox="0 0 9 5"><path d="M0 5H9L4.5 0Z" fill="#707070"/></svg>
<div class="a" style="left:1397px;top:801.5px;width:15px;height:15px;background:#fff;"></div>
<svg class="a" style="left:1400px;top:808px;" width="9" height="5" viewBox="0 0 9 5"><path d="M0 0H9L4.5 5Z" fill="#707070"/></svg>
<div class="a" style="left:1413px;top:226px;width:1px;height:617px;background:#d2d2d2;"></div>
<div class="a" style="left:1414px;top:226px;width:277px;height:617px;background:#e6e6e6;"></div>
<div class="t" style="left:1423.4px;top:236.29px;font-size:19.5px;line-height:19.5px;color:#2a7a4f;font-weight:400;">Queries &amp; Connectio...</div>
<svg class="a" style="left:1631px;top:242px;" width="6" height="3" viewBox="0 0 6 3"><path d="M0 0H6L3 3Z" fill="#666"/></svg>
<svg class="a" style="left:1670.5px;top:240.5px;" width="6" height="6" viewBox="0 0 6 6"><path d="M0.5 0.5L5.5 5.5M5.5 0.5L0.5 5.5" stroke="#666" stroke-width="1"/></svg>
<div class="t" style="left:1423.4px;top:274.90px;font-size:11.1px;line-height:11.1px;color:#444;font-weight:700;">Queries</div>
<div class="a" style="left:1471px;top:270px;width:1px;height:17px;background:#b8b8b8;"></div>
<div class="t" style="left:1480.4px;top:274.48px;font-size:11.6px;line-height:11.6px;color:#444;font-weight:400;">Connections</div>
<div class="t" style="left:1423.4px;top:303.81px;font-size:10.5px;line-height:10.5px;color:#555;font-weight:400;">2 queries</div>
<div class="a" style="left:1423px;top:317.5px;width:260px;height:1.5px;background:#c2c2c2;"></div>
<svg class="a" style="left:1427.5px;top:332.5px;" width="15" height="13" viewBox="0 0 15 13"><rect x="0.5" y="0.5" width="13.5" height="11.5" fill="#fff" stroke="#a8a8a8"/><rect x="0.5" y="0.5" width="13.5" height="2" fill="#4a7fc1"/><path d="M1 5.5H14M1 8.5H14M5 3V12M9.5 3V12" stroke="#bdbdbd" stroke-width="0.8"/></svg>
<div class="t" style="left:1446.4px;top:333.69px;font-size:13.6px;line-height:13.6px;color:#777;font-weight:400;">Query1</div>
<div class="t" style="left:1446.4px;top:354.59px;font-size:12.3px;line-height:12.3px;color:#404040;font-weight:400;">50 rows loaded.</div>
<div class="a" style="left:1423px;top:375px;width:260px;height:47.5px;background:#9fd4b6;"></div>
<svg class="a" style="left:1427.5px;top:381px;" width="15" height="13" viewBox="0 0 15 13"><rect x="0.5" y="0.5" width="13.5" height="11.5" fill="#fff" stroke="#a8a8a8"/><rect x="0.5" y="0.5" width="13.5" height="2" fill="#4a7fc1"/><path d="M1 5.5H14M1 8.5H14M5 3V12M9.5 3V12" stroke="#bdbdbd" stroke-width="0.8"/></svg>
<div class="t" style="left:1446.4px;top:382.19px;font-size:13.6px;line-height:13.6px;color:#777;font-weight:400;">Query2</div>
<div class="t" style="left:1446.4px;top:403.29px;font-size:12.3px;line-height:12.3px;color:#404040;font-weight:400;">50 rows loaded.</div>
<svg class="a" style="left:1666px;top:380px;" width="16" height="17" viewBox="0 0 16 17"><path d="M1.5 1.5H8L11.5 5V14.5H1.5Z" fill="#fff" stroke="#c8c8c8"/><circle cx="12" cy="13" r="3.2" fill="none" stroke="#4fa07a" stroke-width="1.3"/></svg>
<div class="a" style="left:1423px;top:817px;width:260px;height:16px;background:#f0f0f0;"></div>
<div class="a" style="left:1434px;top:817px;width:237px;height:16px;background:#c8c8c8;"></div>
<svg class="a" style="left:1426px;top:821px;" width="6" height="9" viewBox="0 0 6 9"><path d="M5 0.5L1 4.5L5 8.5" stroke="#555" stroke-width="1.3" fill="none"/></svg>
<svg class="a" style="left:1673px;top:821px;" width="6" height="9" viewBox="0 0 6 9"><path d="M1 0.5L5 4.5L1 8.5" stroke="#555" stroke-width="1.3" fill="none"/></svg>
<svg class="a" style="left:68px;top:825px;" width="5" height="8" viewBox="0 0 5 8"><path d="M4.5 0L0.5 4L4.5 8" fill="#c4c4c4"/></svg>
<svg class="a" style="left:95px;top:825px;" width="5" height="8" viewBox="0 0 5 8"><path d="M0.5 0L4.5 4L0.5 8" fill="#c4c4c4"/></svg>
<div class="a" style="left:138px;top:816px;width:65px;height:24px;background:#fff;"></div>
<div class="a" style="left:138px;top:837px;width:65px;height:3px;background:#217346;"></div>
<div class="t" style="left:-30.00px;width:400px;text-align:center;top:821.92px;font-size:12.5px;line-height:12.5px;color:#217346;font-weight:700;">Sheet3</div>
<div class="t" style="left:34.60px;width:400px;text-align:center;top:822.00px;font-size:12.4px;line-height:12.4px;color:#444;font-weight:400;">Sheet2</div>
<div class="a" style="left:267px;top:820px;width:1px;height:18px;background:#a8a8a8;"></div>
<div class="t" style="left:99.00px;width:400px;text-align:center;top:822.00px;font-size:12.4px;line-height:12.4px;color:#444;font-weight:400;">Sheet1</div>
<div class="a" style="left:331px;top:820px;width:1px;height:18px;background:#a8a8a8;"></div>
<svg class="a" style="left:364px;top:822px;" width="16" height="16" viewBox="0 0 16 16"><circle cx="8" cy="8" r="7.2" fill="none" stroke="#777" stroke-width="1.1"/><path d="M8 4.2V11.8M4.2 8H11.8" stroke="#666" stroke-width="1.8"/></svg>
<div class="a" style="left:865px;top:821px;width:1.5px;height:1.5px;background:#a0a0a0;"></div>
<div class="a" style="left:865px;top:827px;width:1.5px;height:1.5px;background:#a0a0a0;"></div>
<div class="a" style="left:865px;top:833px;width:1.5px;height:1.5px;background:#a0a0a0;"></div>
<div class="a" style="left:880px;top:822.5px;width:500px;height:14.5px;background:#dcdcdc;"></div>
<div class="a" style="left:880px;top:822.5px;width:208px;height:14.5px;background:#fff;"></div>
<div class="a" style="left:895px;top:822.5px;width:1px;height:14.5px;background:#dcdcdc;"></div>
<svg class="a" style="left:884px;top:826px;" width="5" height="8" viewBox="0 0 5 8"><path d="M4.5 0L0.5 4L4.5 8Z" fill="#555"/></svg>
<div class="a" style="left:1380px;top:822.5px;width:14px;height:14.5px;background:#fff;"></div>
<svg class="a" style="left:1384.5px;top:826px;" width="5" height="8" viewBox="0 0 5 8"><path d="M0.5 0L4.5 4L0.5 8Z" fill="#555"/></svg>
<div class="t" style="left:45.3px;top:853.67px;font-size:10.2px;line-height:10.2px;color:#444;font-weight:400;">Ready</div>
<div class="t" style="left:1183.2px;top:853.66px;font-size:10.8px;line-height:10.8px;color:#444;font-weight:400;letter-spacing:-0.5px;">Average: 8657.988522</div>
<div class="t" style="left:1291.4px;top:853.66px;font-size:10.8px;line-height:10.8px;color:#444;font-weight:400;letter-spacing:-0.5px;">Count: 1356</div>
<div class="t" style="left:1354.8px;top:853.66px;font-size:10.8px;line-height:10.8px;color:#444;font-weight:400;letter-spacing:-0.5px;">Sum: 6718599.093</div>
<div class="a" style="left:1450px;top:843px;width:28px;height:31px;background:#c6c6c6;"></div>
<svg class="a" style="left:1457px;top:851px;" width="13" height="13" viewBox="0 0 13 13"><rect x="0.5" y="0.5" width="11" height="11" fill="none" stroke="#8a8a8a"/><path d="M4 0.5V11.5M8 0.5V11.5M0.5 4H11.5M0.5 8H11.5" stroke="#8a8a8a"/></svg>
<svg class="a" style="left:1485px;top:852px;" width="13" height="12" viewBox="0 0 13 12"><rect x="0.5" y="0.5" width="11" height="10.5" fill="none" stroke="#9a9a9a"/><rect x="3" y="2.5" width="6" height="6.5" fill="none" stroke="#b0b0b0"/></svg>
<svg class="a" style="left:1512px;top:852px;" width="13" height="12" viewBox="0 0 13 12"><rect x="0.5" y="0.5" width="11" height="10.5" fill="none" stroke="#9a9a9a"/><path d="M4 0.5V5.5H0.5M7 0.5V5.5" stroke="#9a9a9a" fill="none"/></svg>
<div class="a" style="left:1537px;top:853px;width:6px;height:1.5px;background:#555;"></div>
<div class="a" style="left:1547px;top:858px;width:96px;height:1px;background:#999;"></div>
<div class="a" style="left:1593px;top:853px;width:5px;height:11px;background:#666;"></div>
<div class="a" style="left:1647px;top:853px;width:7px;height:1.5px;background:#555;"></div>
<div class="a" style="left:1649.8px;top:850px;width:1.5px;height:7px;background:#555;"></div>
<div class="t" style="left:1286.00px;width:400px;text-align:right;top:854.17px;font-size:10.2px;line-height:10.2px;color:#444;font-weight:400;letter-spacing:-0.6px;">100%</div>
<svg class="a" style="left:0px;top:0px;" width="120" height="160" viewBox="0 0 120 160"><ellipse cx="59.5" cy="105.7" rx="30.7" ry="40.2" fill="none" stroke="#ff0000" stroke-width="3.3"/></svg>
</body></html>
